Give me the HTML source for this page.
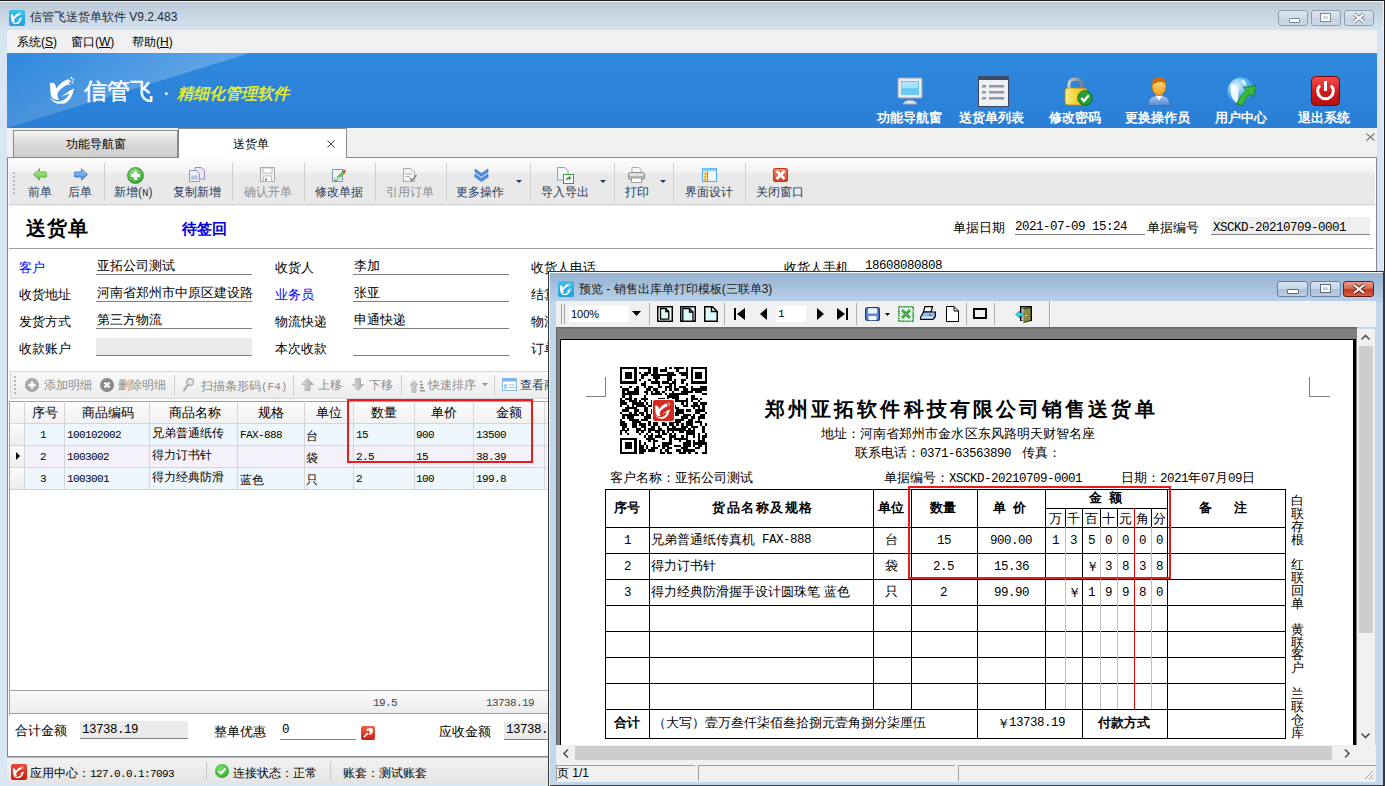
<!DOCTYPE html><html><head><meta charset="utf-8"><style>
html,body{margin:0;padding:0;width:1385px;height:786px;overflow:hidden;position:relative;background:#d9e4f1;font-family:'Liberation Sans',sans-serif}
.t{position:absolute;white-space:nowrap}
.r{position:absolute}
svg{position:absolute;overflow:visible}
</style></head><body>
<div class="r" style="left:0px;top:0px;width:1385px;height:786px;background:linear-gradient(#bccad7 2px,#d5e2ef 30px,#d9e5f2 60px,#dbe6f3 786px)"></div>
<div class="r" style="left:0px;top:0px;width:1385px;height:1px;background:#1e1e1e"></div>
<div class="r" style="left:0px;top:1px;width:1384px;height:1px;background:#eef2f6"></div>
<div class="r" style="left:1383px;top:1px;width:1px;height:785px;background:#e8eef4"></div>
<div class="r" style="left:1384px;top:0px;width:1px;height:786px;background:#1e1e1e"></div>
<div class="r" style="left:9px;top:10px;width:16px;height:16px;background:linear-gradient(#3cc0f0,#1e9ee0);border-radius:2px"></div>
<svg style="left:9px;top:9.5px" width="16.6" height="16.6" viewBox="0 0 36 36"><g fill="#fff" transform="translate(-2 -1)"><path d="M5.7 11 C7.5 10.6 9.5 10.8 10.5 11.5 C11.5 13 12 15 12.4 16.5 C15 12 19.5 8.5 24.7 6.9 C25 8.5 25.2 10.5 25.2 11.9 C21.5 13 17 16.5 14.5 19.5 C13.2 21.5 13 24 15.1 27.9 C12 28 10 27.5 8.8 26.5 C7 24.5 6.3 21 6.3 17 C6.3 14.5 6.2 12.5 5.7 11Z"/><path d="M5.3 24.5 C7.5 30.5 13.5 32.6 19.5 31.6 C25 30.4 29 24 29.8 16.5 C26.5 18.5 21 21 17.3 25.3 C20.5 23.5 23 22.5 25.3 21.8 C23 27 18.5 29.6 13.5 29.4 C10 29.2 7 27.5 5.3 24.5Z"/><circle cx="27.5" cy="6" r="1"/><circle cx="29.3" cy="7.8" r="0.9"/><circle cx="25.8" cy="9.2" r="0.9"/><circle cx="28.3" cy="10.5" r="0.9"/><circle cx="25" cy="12.4" r="0.8"/></g></svg>
<div class="t" style="left:30px;top:11px;font-size:12px;line-height:12px;color:#1e2a3a;font-weight:normal;font-family:'Liberation Sans',sans-serif;">信管飞送货单软件 V9.2.483</div>
<div class="r" style="left:1278px;top:10px;width:30px;height:16px;box-sizing:border-box;border:1px solid #8e9cb0;border-radius:3px;background:linear-gradient(#dbe4ee 0,#d0dbe7 50%,#c5d3e2 51%,#ccd9e7 100%)"></div>
<div class="r" style="left:1311px;top:10px;width:30px;height:16px;box-sizing:border-box;border:1px solid #8e9cb0;border-radius:3px;background:linear-gradient(#dbe4ee 0,#d0dbe7 50%,#c5d3e2 51%,#ccd9e7 100%)"></div>
<div class="r" style="left:1344px;top:10px;width:30px;height:16px;box-sizing:border-box;border:1px solid #8e9cb0;border-radius:3px;background:linear-gradient(#dbe4ee 0,#d0dbe7 50%,#c5d3e2 51%,#ccd9e7 100%)"></div>
<div class="r" style="left:1289px;top:18px;width:9px;height:3px;background:#fff;border:1px solid #7c8797;border-radius:1px"></div>
<div class="r" style="left:1321px;top:14px;width:9px;height:7px;box-sizing:border-box;border:2px solid #fff;outline:1px solid #7c8797;"></div>
<svg style="left:1352px;top:13px" width="14" height="10" viewBox="0 0 14 10"><path d="M2 1 L12 9 M12 1 L2 9" stroke="#7c8797" stroke-width="4"/><path d="M2 1 L12 9 M12 1 L2 9" stroke="#fff" stroke-width="2.2"/></svg>
<div class="r" style="left:7px;top:30px;width:1370px;height:23px;background:#f0f0f0"></div>
<div class="t" style="left:17px;top:36px;font-size:12px;line-height:12px;color:#000;font-weight:normal;font-family:'Liberation Sans',sans-serif;">系统(<u>S</u>)</div>
<div class="t" style="left:71px;top:36px;font-size:12px;line-height:12px;color:#000;font-weight:normal;font-family:'Liberation Sans',sans-serif;">窗口(<u>W</u>)</div>
<div class="t" style="left:132px;top:36px;font-size:12px;line-height:12px;color:#000;font-weight:normal;font-family:'Liberation Sans',sans-serif;">帮助(<u>H</u>)</div>
<svg style="left:7px;top:53px" width="1370" height="75" viewBox="0 0 1370 75">
<defs><linearGradient id="bg1" x1="0" y1="0" x2="0" y2="1"><stop offset="0" stop-color="#2e89df"/><stop offset="1" stop-color="#2a7fd5"/></linearGradient>
<linearGradient id="bg2" x1="0" y1="0" x2="1" y2="0.6"><stop offset="0" stop-color="#fff" stop-opacity="0"/><stop offset="1" stop-color="#fff" stop-opacity="0.34"/></linearGradient></defs>
<rect width="1370" height="75" fill="url(#bg1)"/>
<path d="M0 0 L243 0 L0 75Z" fill="url(#bg2)"/>
<path d="M0 75 L560 8 L0 75Z" fill="#fff" opacity="0.06"/>
</svg>
<svg style="left:44px;top:72px" width="36.0" height="36.0" viewBox="0 0 36 36"><g fill="#fff" transform="translate(0 0)"><path d="M5.7 11 C7.5 10.6 9.5 10.8 10.5 11.5 C11.5 13 12 15 12.4 16.5 C15 12 19.5 8.5 24.7 6.9 C25 8.5 25.2 10.5 25.2 11.9 C21.5 13 17 16.5 14.5 19.5 C13.2 21.5 13 24 15.1 27.9 C12 28 10 27.5 8.8 26.5 C7 24.5 6.3 21 6.3 17 C6.3 14.5 6.2 12.5 5.7 11Z"/><path d="M5.3 24.5 C7.5 30.5 13.5 32.6 19.5 31.6 C25 30.4 29 24 29.8 16.5 C26.5 18.5 21 21 17.3 25.3 C20.5 23.5 23 22.5 25.3 21.8 C23 27 18.5 29.6 13.5 29.4 C10 29.2 7 27.5 5.3 24.5Z"/><circle cx="27.5" cy="6" r="1"/><circle cx="29.3" cy="7.8" r="0.9"/><circle cx="25.8" cy="9.2" r="0.9"/><circle cx="28.3" cy="10.5" r="0.9"/><circle cx="25" cy="12.4" r="0.8"/></g></svg>
<div class="t" style="left:84px;top:80px;font-size:23px;line-height:23px;color:#fff;font-weight:500;font-family:'Liberation Sans',sans-serif;letter-spacing:0px;-webkit-text-stroke:0.5px #fff">信管飞</div>
<div class="t" style="left:164px;top:86px;font-size:16px;line-height:16px;color:#fff;font-weight:bold;font-family:'Liberation Sans',sans-serif;">·</div>
<div class="t" style="left:177px;top:86px;font-size:16px;line-height:16px;color:#eef21c;font-weight:500;font-family:'Liberation Sans',sans-serif;font-style:italic;-webkit-text-stroke:0.45px #eef21c">精细化管理软件</div>
<div class="t" style="left:877px;top:111px;font-size:13px;line-height:13px;color:#fff;font-weight:bold;font-family:'Liberation Sans',sans-serif;">功能导航窗</div>
<div class="t" style="left:959px;top:111px;font-size:13px;line-height:13px;color:#fff;font-weight:bold;font-family:'Liberation Sans',sans-serif;">送货单列表</div>
<div class="t" style="left:1049px;top:111px;font-size:13px;line-height:13px;color:#fff;font-weight:bold;font-family:'Liberation Sans',sans-serif;">修改密码</div>
<div class="t" style="left:1125px;top:111px;font-size:13px;line-height:13px;color:#fff;font-weight:bold;font-family:'Liberation Sans',sans-serif;">更换操作员</div>
<div class="t" style="left:1215px;top:111px;font-size:13px;line-height:13px;color:#fff;font-weight:bold;font-family:'Liberation Sans',sans-serif;">用户中心</div>
<div class="t" style="left:1298px;top:111px;font-size:13px;line-height:13px;color:#fff;font-weight:bold;font-family:'Liberation Sans',sans-serif;">退出系统</div>
<svg style="left:897px;top:77px" width="26" height="28" viewBox="0 0 26 28">
<rect x="1" y="1" width="24" height="20" rx="1" fill="#e8ecef" stroke="#9aa3ab"/>
<rect x="4" y="4" width="18" height="14" fill="#6cc8f4"/><rect x="5" y="5" width="16" height="6" fill="#a8e2fb"/>
<path d="M6 27 C8 22 18 22 20 27Z" fill="#e6e9ec" stroke="#a0a8b0"/>
</svg>
<svg style="left:978px;top:76px" width="31" height="31" viewBox="0 0 31 31">
<rect x="0.5" y="0.5" width="30" height="30" fill="#eef0f4" stroke="#3c4660"/>
<rect x="0" y="0" width="31" height="4" fill="#3c4a6a"/>
<rect x="4" y="9" width="4" height="2.5" fill="#8f95aa"/><rect x="11" y="9" width="15" height="2.5" fill="#8f95aa"/>
<rect x="4" y="15" width="4" height="2.5" fill="#8f95aa"/><rect x="11" y="15" width="15" height="2.5" fill="#8f95aa"/>
<rect x="4" y="21" width="4" height="2.5" fill="#8f95aa"/><rect x="11" y="21" width="15" height="2.5" fill="#8f95aa"/>
</svg>
<svg style="left:1064px;top:76px" width="29" height="31" viewBox="0 0 29 31">
<defs><linearGradient id="lk" x1="0" y1="0" x2="1" y2="0"><stop offset="0" stop-color="#f8e88a"/><stop offset="0.5" stop-color="#f4d434"/><stop offset="1" stop-color="#d8a810"/></linearGradient>
<linearGradient id="sh" x1="0" y1="0" x2="1" y2="0"><stop offset="0" stop-color="#c8ccd0"/><stop offset="1" stop-color="#7a8088"/></linearGradient></defs>
<path d="M5 13 V8 C5 1.5 18 1.5 18 8 V13" fill="none" stroke="url(#sh)" stroke-width="3.2"/>
<rect x="1" y="12" width="22" height="17" rx="3" fill="url(#lk)" stroke="#b08a10" stroke-width="0.8"/>
<circle cx="21" cy="22" r="7.3" fill="#22a030" stroke="#0c6a18" stroke-width="0.8"/>
<path d="M17.2 22 L20 25 L24.8 19.3" fill="none" stroke="#fff" stroke-width="2.4"/>
</svg>
<svg style="left:1147px;top:76px" width="24" height="31" viewBox="0 0 24 31">
<defs><linearGradient id="pf" x1="0" y1="0" x2="0" y2="1"><stop offset="0" stop-color="#ffe08a"/><stop offset="1" stop-color="#f5a020"/></linearGradient>
<linearGradient id="pb" x1="0" y1="0" x2="0" y2="1"><stop offset="0" stop-color="#a8c8f0"/><stop offset="1" stop-color="#5a88d0"/></linearGradient></defs>
<path d="M1 29.5 C1 22 5 19.5 12 19.5 C19 19.5 23 22 23 29.5Z" fill="url(#pb)" stroke="#3f6aa8" stroke-width="0.8"/>
<path d="M8.5 19.5 L12 24.5 L15.5 19.5Z" fill="#fff"/>
<ellipse cx="12" cy="10.5" rx="7" ry="8.8" fill="url(#pf)" stroke="#b86a08" stroke-width="0.8"/>
<path d="M5 9.5 C4.5 2.5 9 1 12 1 C16 1 20 3 19 9.5 C17.5 6.5 15 5.5 12 6 C9 6.5 7 7.5 5 9.5Z" fill="#c8700e"/>
</svg>
<svg style="left:1227px;top:77px" width="30" height="29" viewBox="0 0 30 29">
<defs><radialGradient id="gl" cx="0.35" cy="0.3" r="0.8"><stop offset="0" stop-color="#d8f0ff"/><stop offset="0.5" stop-color="#5ab4f0"/><stop offset="1" stop-color="#1f6fc0"/></radialGradient></defs>
<circle cx="14" cy="14" r="13.5" fill="url(#gl)"/>
<path d="M4 7 C8 6 9 10 12 12 C10 16 13 20 10 26 C5 23 2 16 4 7Z" fill="#fff" opacity="0.9"/>
<path d="M14 3 C17 3 20 5 19 8 C17 8 15 6 14 3Z" fill="#fff" opacity="0.8"/>
<path d="M10 27.5 C12 21 15 16.5 19.5 14 L16.5 10.5 L28.5 8.5 L26.5 20 L23 16.8 C20 19 17.5 23 16 28.5Z" fill="#3cb83a" stroke="#177a1a" stroke-width="0.8"/>
</svg>
<svg style="left:1311px;top:76px" width="29" height="30" viewBox="0 0 29 30">
<defs><linearGradient id="pw" x1="0" y1="0" x2="0" y2="1"><stop offset="0" stop-color="#f05050"/><stop offset="0.5" stop-color="#d41c1c"/><stop offset="1" stop-color="#b01010"/></linearGradient></defs>
<rect x="0.5" y="0.5" width="28" height="29" rx="4" fill="url(#pw)" stroke="#7a0808"/>
<path d="M9 9.5 A7.8 7.8 0 1 0 20 9.5" fill="none" stroke="#fff" stroke-width="3"/>
<rect x="13" y="5" width="3" height="10" fill="#fff"/>
</svg>
<div class="r" style="left:7px;top:128px;width:1370px;height:29px;background:#f0f0f0"></div>
<div class="r" style="left:13px;top:130px;width:165px;height:27px;box-sizing:border-box;border:1px solid #8a8a8a;border-bottom:none;background:linear-gradient(#f4f4f4,#d9d9d9 50%,#cfcfcf)"></div>
<div class="t" style="left:66px;top:138px;font-size:12px;line-height:12px;color:#000;font-weight:normal;font-family:'Liberation Sans',sans-serif;">功能导航窗</div>
<div class="r" style="left:178px;top:128px;width:169px;height:30px;box-sizing:border-box;border:1px solid #8a8a8a;border-bottom:none;background:#fff"></div>
<div class="t" style="left:233px;top:138px;font-size:12px;line-height:12px;color:#000;font-weight:normal;font-family:'Liberation Sans',sans-serif;">送货单</div>
<svg style="left:326px;top:139px" width="10" height="10" viewBox="0 0 10 10"><path d="M1.5 1.5 L8.5 8.5 M8.5 1.5 L1.5 8.5" stroke="#444" stroke-width="1"/></svg>
<svg style="left:1366px;top:133px" width="9" height="8" viewBox="0 0 9 8"><path d="M0.5 0.5 L8.5 7.5 M8.5 0.5 L0.5 7.5" stroke="#777" stroke-width="1.1"/></svg>
<div class="r" style="left:7px;top:157px;width:1370px;height:600px;box-sizing:border-box;border:1px solid #828790;background:#fff"></div>
<div class="r" style="left:179px;top:157px;width:167px;height:1px;background:#fff"></div>
<div class="r" style="left:9px;top:158px;width:1366px;height:46px;background:linear-gradient(#fdfdfd 0,#f3f3f3 14px,#e8e8e8 16px,#e9e9e9 100%)"></div>
<div class="r" style="left:9px;top:204px;width:1366px;height:1px;background:#d2d2d2"></div>
<div class="r" style="left:9px;top:205px;width:1366px;height:1px;background:#efefef"></div>
<div class="r" style="left:13px;top:172px;width:2px;height:2px;background:#b8b8b8"></div>
<div class="r" style="left:13px;top:176px;width:2px;height:2px;background:#b8b8b8"></div>
<div class="r" style="left:13px;top:180px;width:2px;height:2px;background:#b8b8b8"></div>
<div class="r" style="left:13px;top:184px;width:2px;height:2px;background:#b8b8b8"></div>
<div class="r" style="left:13px;top:188px;width:2px;height:2px;background:#b8b8b8"></div>
<div class="r" style="left:13px;top:192px;width:2px;height:2px;background:#b8b8b8"></div>
<div class="r" style="left:104px;top:163px;width:1px;height:38px;background:#cfcfcf"></div>
<div class="r" style="left:232px;top:163px;width:1px;height:38px;background:#cfcfcf"></div>
<div class="r" style="left:304px;top:163px;width:1px;height:38px;background:#cfcfcf"></div>
<div class="r" style="left:375px;top:163px;width:1px;height:38px;background:#cfcfcf"></div>
<div class="r" style="left:446px;top:163px;width:1px;height:38px;background:#cfcfcf"></div>
<div class="r" style="left:530px;top:163px;width:1px;height:38px;background:#cfcfcf"></div>
<div class="r" style="left:614px;top:163px;width:1px;height:38px;background:#cfcfcf"></div>
<div class="r" style="left:673px;top:163px;width:1px;height:38px;background:#cfcfcf"></div>
<div class="r" style="left:745px;top:163px;width:1px;height:38px;background:#cfcfcf"></div>
<div class="t" style="left:28px;top:186px;font-size:12px;line-height:12px;color:#1e395b;font-weight:normal;font-family:'Liberation Sans',sans-serif;">前单</div>
<div class="t" style="left:68px;top:186px;font-size:12px;line-height:12px;color:#1e395b;font-weight:normal;font-family:'Liberation Sans',sans-serif;">后单</div>
<div class="t" style="left:114px;top:186px;font-size:12px;line-height:12px;color:#1e395b;font-weight:normal;font-family:'Liberation Sans',sans-serif;">新增(<span style="font-family:'Liberation Mono',monospace;font-size:11px">N</span>)</div>
<div class="t" style="left:173px;top:186px;font-size:12px;line-height:12px;color:#1e395b;font-weight:normal;font-family:'Liberation Sans',sans-serif;">复制新增</div>
<div class="t" style="left:244px;top:186px;font-size:12px;line-height:12px;color:#8d8d8d;font-weight:normal;font-family:'Liberation Sans',sans-serif;">确认开单</div>
<div class="t" style="left:315px;top:186px;font-size:12px;line-height:12px;color:#1e395b;font-weight:normal;font-family:'Liberation Sans',sans-serif;">修改单据</div>
<div class="t" style="left:386px;top:186px;font-size:12px;line-height:12px;color:#8d8d8d;font-weight:normal;font-family:'Liberation Sans',sans-serif;">引用订单</div>
<div class="t" style="left:456px;top:186px;font-size:12px;line-height:12px;color:#1e395b;font-weight:normal;font-family:'Liberation Sans',sans-serif;">更多操作</div>
<div class="t" style="left:541px;top:186px;font-size:12px;line-height:12px;color:#1e395b;font-weight:normal;font-family:'Liberation Sans',sans-serif;">导入导出</div>
<div class="t" style="left:625px;top:186px;font-size:12px;line-height:12px;color:#1e395b;font-weight:normal;font-family:'Liberation Sans',sans-serif;">打印</div>
<div class="t" style="left:685px;top:186px;font-size:12px;line-height:12px;color:#1e395b;font-weight:normal;font-family:'Liberation Sans',sans-serif;">界面设计</div>
<div class="t" style="left:756px;top:186px;font-size:12px;line-height:12px;color:#1e395b;font-weight:normal;font-family:'Liberation Sans',sans-serif;">关闭窗口</div>
<svg style="left:516px;top:180px" width="6" height="3" viewBox="0 0 6 3"><path d="M0 0 H6 L3 3Z" fill="#1e395b"/></svg>
<svg style="left:600px;top:180px" width="6" height="3" viewBox="0 0 6 3"><path d="M0 0 H6 L3 3Z" fill="#1e395b"/></svg>
<svg style="left:660px;top:180px" width="6" height="3" viewBox="0 0 6 3"><path d="M0 0 H6 L3 3Z" fill="#1e395b"/></svg>
<svg style="left:33px;top:168px" width="14" height="13" viewBox="0 0 14 13"><defs><linearGradient id="ga" x1="0" y1="0" x2="0" y2="1"><stop offset="0" stop-color="#c8f0a0"/><stop offset="1" stop-color="#5cc040"/></linearGradient></defs>
<path d="M0.5 6.5 L6.5 0.8 V4 H13.3 V9 H6.5 V12.2Z" fill="url(#ga)" stroke="#58b040" stroke-width="0.9"/></svg>
<svg style="left:74px;top:168px" width="14" height="13" viewBox="0 0 14 13"><defs><linearGradient id="gb" x1="0" y1="0" x2="0" y2="1"><stop offset="0" stop-color="#a8d0fa"/><stop offset="1" stop-color="#3a82e0"/></linearGradient></defs>
<path d="M13.5 6.5 L7.5 0.8 V4 H0.7 V9 H7.5 V12.2Z" fill="url(#gb)" stroke="#3a7ad0" stroke-width="0.9"/></svg>
<svg style="left:127px;top:167px" width="17" height="17" viewBox="0 0 17 17"><defs><radialGradient id="gc" cx="0.45" cy="0.35" r="0.7"><stop offset="0" stop-color="#9ee88a"/><stop offset="1" stop-color="#2ea02a"/></radialGradient></defs>
<circle cx="8.5" cy="8.5" r="8" fill="url(#gc)" stroke="#2a8a26" stroke-width="0.8"/><path d="M8.5 4 V13 M4 8.5 H13" stroke="#fff" stroke-width="3"/></svg>
<svg style="left:189px;top:167px" width="16" height="15" viewBox="0 0 16 15"><path d="M6 0.5 H12.5 L15.5 3.5 V12 H6Z" fill="#ece6f6" stroke="#9a88c8"/><path d="M0.5 3.5 H7.5 L10.5 6.5 V14.5 H0.5Z" fill="#eef2fa" stroke="#8c9cc0"/><rect x="2" y="8.5" width="7" height="4" fill="#b8c4e0"/></svg>
<svg style="left:260px;top:167px" width="15" height="15" viewBox="0 0 15 15"><path d="M0.5 0.5 H14.5 V14.5 H0.5Z" fill="#f2f2f2" stroke="#a8a8a8" stroke-width="1"/><rect x="3" y="1" width="9" height="5" fill="#fff" stroke="#b0b0b0" stroke-width="0.8"/><rect x="3.5" y="9" width="8" height="5.5" fill="#fff" stroke="#b0b0b0" stroke-width="0.8"/><rect x="5" y="11" width="2" height="3" fill="#a0a0a0"/></svg>
<svg style="left:332px;top:168px" width="14" height="14" viewBox="0 0 14 14"><path d="M0.5 1.5 H10.5 V13.5 H0.5Z" fill="#f4f8fc" stroke="#7890c0"/><path d="M3 11 L11 3 L13 5 L5 12.5 L2.5 13Z" fill="#70c850" stroke="#3a8a2a" stroke-width="0.6"/><circle cx="12.2" cy="3.2" r="1.6" fill="#e84c3c"/><rect x="2" y="9" width="7" height="3" fill="#c8d4e8" opacity="0.8"/></svg>
<svg style="left:403px;top:168px" width="14" height="14" viewBox="0 0 14 14"><path d="M0.5 0.5 H8 L11.5 4 V13.5 H0.5Z" fill="#f4f4f4" stroke="#a8a8a8"/><path d="M2.5 6 H9 M2.5 8.5 H7" stroke="#b0b0b0"/><path d="M7 10 L9 12.5 L13.5 7" fill="none" stroke="#8a8a8a" stroke-width="1.6"/></svg>
<svg style="left:474px;top:168px" width="15" height="14" viewBox="0 0 15 14"><path d="M1 1 L7.5 5.5 L14 1 V4 L7.5 8.5 L1 4Z" fill="#4a90e8" stroke="#2a6ac8" stroke-width="0.6"/><path d="M1 6 L7.5 10.5 L14 6 V9 L7.5 13.5 L1 9Z" fill="#4a90e8" stroke="#2a6ac8" stroke-width="0.6"/></svg>
<svg style="left:557px;top:167px" width="17" height="17" viewBox="0 0 17 17"><path d="M0.5 0.5 H8 L11 3.5 V13 H0.5Z" fill="#f0f4fc" stroke="#8aa0cc"/><rect x="6.5" y="7.5" width="10" height="9" fill="#fff" stroke="#3aa040"/><path d="M9 14 C9 11 10 10 12 10 V8.5 L14.5 11 L12 13.5 V12 C11 12 10 12.5 9 14Z" fill="#3aa040"/></svg>
<svg style="left:628px;top:167px" width="17" height="16" viewBox="0 0 17 16"><path d="M4 0.5 H11 L13 2.5 V6 H4Z" fill="#f4f8ff" stroke="#9ab0d8"/><rect x="0.5" y="5.5" width="16" height="7" rx="2" fill="#b8b8b8" stroke="#8a8a8a"/><rect x="1.5" y="6" width="14" height="3" rx="1" fill="#e0e0e0"/><rect x="3.5" y="11" width="10" height="4.5" fill="#fff" stroke="#a0a0a0"/></svg>
<svg style="left:702px;top:168px" width="15" height="14" viewBox="0 0 15 14"><rect x="0.5" y="0.5" width="14" height="13" fill="#f0f4ff" stroke="#4aa8f0"/><rect x="0.5" y="0.5" width="14" height="2.5" fill="#8ccaf8"/><rect x="1.5" y="3.5" width="3.5" height="9.5" fill="#f8e080"/><rect x="2.5" y="5" width="1.5" height="1.5" fill="#e08a20"/><rect x="2.5" y="8" width="1.5" height="1.5" fill="#e08a20"/><rect x="2.5" y="11" width="1.5" height="1.5" fill="#e08a20"/><path d="M5.5 3 V13.5" stroke="#4aa8f0"/></svg>
<svg style="left:773px;top:168px" width="15" height="14" viewBox="0 0 15 14"><defs><linearGradient id="gd" x1="0" y1="0" x2="0" y2="1"><stop offset="0" stop-color="#f88a6a"/><stop offset="1" stop-color="#d8381a"/></linearGradient></defs><rect x="0.5" y="0.5" width="14" height="13" rx="1.5" fill="url(#gd)" stroke="#c03a20"/><path d="M3.5 3 L11.5 11 M11.5 3 L3.5 11" stroke="#fff" stroke-width="2.8"/></svg>
<div class="t" style="left:26px;top:218px;font-size:20px;line-height:20px;color:#000;font-weight:bold;font-family:'Liberation Serif',serif;letter-spacing:1px">送货单</div>
<div class="t" style="left:182px;top:221px;font-size:15px;line-height:15px;color:#0000e0;font-weight:bold;font-family:'Liberation Sans',sans-serif;">待签回</div>
<div class="t" style="left:953px;top:221px;font-size:13px;line-height:13px;color:#000;font-weight:normal;font-family:'Liberation Sans',sans-serif;">单据日期</div>
<div class="t" style="left:1015px;top:221px;font-size:12.5px;line-height:12.5px;color:#000;font-weight:normal;font-family:'Liberation Mono',monospace;letter-spacing:-0.5px">2021-07-09 15:24</div>
<div class="r" style="left:1015px;top:234px;width:130px;height:1px;background:#808080"></div>
<div class="t" style="left:1147px;top:221px;font-size:13px;line-height:13px;color:#000;font-weight:normal;font-family:'Liberation Sans',sans-serif;">单据编号</div>
<div class="r" style="left:1211px;top:217px;width:159px;height:18px;background:#efefef"></div>
<div class="r" style="left:1211px;top:234px;width:159px;height:1px;background:#808080"></div>
<div class="t" style="left:1213px;top:222px;font-size:12.5px;line-height:12.5px;color:#000;font-weight:normal;font-family:'Liberation Mono',monospace;letter-spacing:-0.5px">XSCKD-20210709-0001</div>
<div class="r" style="left:9px;top:248px;width:1365px;height:1px;background:#a0a0a0"></div>
<div class="t" style="left:19px;top:261px;font-size:13px;line-height:13px;color:#0000ff;font-weight:normal;font-family:'Liberation Sans',sans-serif;">客户</div>
<div class="t" style="left:19px;top:288px;font-size:13px;line-height:13px;color:#000;font-weight:normal;font-family:'Liberation Sans',sans-serif;">收货地址</div>
<div class="t" style="left:19px;top:315px;font-size:13px;line-height:13px;color:#000;font-weight:normal;font-family:'Liberation Sans',sans-serif;">发货方式</div>
<div class="t" style="left:19px;top:342px;font-size:13px;line-height:13px;color:#000;font-weight:normal;font-family:'Liberation Sans',sans-serif;">收款账户</div>
<div class="r" style="left:96px;top:274px;width:156px;height:1px;background:#808080"></div>
<div class="t" style="left:97px;top:259px;font-size:13px;line-height:13px;color:#000;font-weight:normal;font-family:'Liberation Sans',sans-serif;">亚拓公司测试</div>
<div class="r" style="left:96px;top:301px;width:156px;height:1px;background:#808080"></div>
<div class="t" style="left:97px;top:286px;font-size:13px;line-height:13px;color:#000;font-weight:normal;font-family:'Liberation Sans',sans-serif;">河南省郑州市中原区建设路</div>
<div class="r" style="left:96px;top:328px;width:156px;height:1px;background:#808080"></div>
<div class="t" style="left:97px;top:313px;font-size:13px;line-height:13px;color:#000;font-weight:normal;font-family:'Liberation Sans',sans-serif;">第三方物流</div>
<div class="r" style="left:96px;top:338px;width:156px;height:17px;background:#ebebeb"></div>
<div class="r" style="left:96px;top:355px;width:156px;height:1px;background:#808080"></div>
<div class="t" style="left:275px;top:261px;font-size:13px;line-height:13px;color:#000;font-weight:normal;font-family:'Liberation Sans',sans-serif;">收货人</div>
<div class="t" style="left:275px;top:288px;font-size:13px;line-height:13px;color:#0000ff;font-weight:normal;font-family:'Liberation Sans',sans-serif;">业务员</div>
<div class="t" style="left:275px;top:315px;font-size:13px;line-height:13px;color:#000;font-weight:normal;font-family:'Liberation Sans',sans-serif;">物流快递</div>
<div class="t" style="left:275px;top:342px;font-size:13px;line-height:13px;color:#000;font-weight:normal;font-family:'Liberation Sans',sans-serif;">本次收款</div>
<div class="r" style="left:353px;top:274px;width:156px;height:1px;background:#808080"></div>
<div class="t" style="left:354px;top:259px;font-size:13px;line-height:13px;color:#000;font-weight:normal;font-family:'Liberation Sans',sans-serif;">李加</div>
<div class="r" style="left:353px;top:301px;width:156px;height:1px;background:#808080"></div>
<div class="t" style="left:354px;top:286px;font-size:13px;line-height:13px;color:#000;font-weight:normal;font-family:'Liberation Sans',sans-serif;">张亚</div>
<div class="r" style="left:353px;top:328px;width:156px;height:1px;background:#808080"></div>
<div class="t" style="left:354px;top:313px;font-size:13px;line-height:13px;color:#000;font-weight:normal;font-family:'Liberation Sans',sans-serif;">申通快递</div>
<div class="r" style="left:353px;top:355px;width:156px;height:1px;background:#808080"></div>
<div class="t" style="left:531px;top:261px;font-size:13px;line-height:13px;color:#000;font-weight:normal;font-family:'Liberation Sans',sans-serif;">收货人电话</div>
<div class="t" style="left:531px;top:288px;font-size:13px;line-height:13px;color:#000;font-weight:normal;font-family:'Liberation Sans',sans-serif;">结算方式</div>
<div class="t" style="left:531px;top:315px;font-size:13px;line-height:13px;color:#000;font-weight:normal;font-family:'Liberation Sans',sans-serif;">物流单号</div>
<div class="t" style="left:531px;top:342px;font-size:13px;line-height:13px;color:#000;font-weight:normal;font-family:'Liberation Sans',sans-serif;">订单号</div>
<div class="t" style="left:784px;top:261px;font-size:13px;line-height:13px;color:#000;font-weight:normal;font-family:'Liberation Sans',sans-serif;">收货人手机</div>
<div class="t" style="left:865px;top:259.5px;font-size:12.5px;line-height:12.5px;color:#000;font-weight:normal;font-family:'Liberation Mono',monospace;letter-spacing:-0.5px">18608080808</div>
<div class="r" style="left:10px;top:371px;width:1364px;height:28px;box-sizing:border-box;border:1px solid #d4d4d4;background:linear-gradient(#fafafa,#ececec)"></div>
<div class="r" style="left:14px;top:376px;width:2px;height:2px;background:#b8b8b8"></div>
<div class="r" style="left:14px;top:380px;width:2px;height:2px;background:#b8b8b8"></div>
<div class="r" style="left:14px;top:384px;width:2px;height:2px;background:#b8b8b8"></div>
<div class="r" style="left:14px;top:388px;width:2px;height:2px;background:#b8b8b8"></div>
<div class="r" style="left:14px;top:392px;width:2px;height:2px;background:#b8b8b8"></div>
<div class="r" style="left:174px;top:375px;width:1px;height:20px;background:#cfcfcf"></div>
<div class="r" style="left:293px;top:375px;width:1px;height:20px;background:#cfcfcf"></div>
<div class="r" style="left:401px;top:375px;width:1px;height:20px;background:#cfcfcf"></div>
<div class="r" style="left:494px;top:375px;width:1px;height:20px;background:#cfcfcf"></div>
<div class="t" style="left:44px;top:379px;font-size:12px;line-height:12px;color:#8d8d8d;font-weight:normal;font-family:'Liberation Sans',sans-serif;">添加明细</div>
<div class="t" style="left:118px;top:379px;font-size:12px;line-height:12px;color:#8d8d8d;font-weight:normal;font-family:'Liberation Sans',sans-serif;">删除明细</div>
<div class="t" style="left:201px;top:379.5px;font-size:12px;line-height:12px;color:#8d8d8d;font-weight:normal;font-family:'Liberation Sans',sans-serif;">扫描条形码<span style="font-family:'Liberation Mono',monospace;font-size:11px">(F4)</span></div>
<div class="t" style="left:318px;top:379px;font-size:12px;line-height:12px;color:#8d8d8d;font-weight:normal;font-family:'Liberation Sans',sans-serif;">上移</div>
<div class="t" style="left:369px;top:379px;font-size:12px;line-height:12px;color:#8d8d8d;font-weight:normal;font-family:'Liberation Sans',sans-serif;">下移</div>
<div class="t" style="left:428px;top:379px;font-size:12px;line-height:12px;color:#8d8d8d;font-weight:normal;font-family:'Liberation Sans',sans-serif;">快速排序</div>
<div class="t" style="left:520px;top:379px;font-size:12px;line-height:12px;color:#1e395b;font-weight:normal;font-family:'Liberation Sans',sans-serif;">查看商品</div>
<div class="r" style="left:25px;top:378px;width:14px;height:14px;border-radius:50%;background:#a8a8a8"></div>
<svg style="left:25px;top:378px" width="14" height="14"><path d="M7 3.5 V10.5 M3.5 7 H10.5" stroke="#fff" stroke-width="2.4"/></svg>
<div class="r" style="left:100px;top:378px;width:14px;height:14px;border-radius:50%;background:#8a8a8a"></div>
<svg style="left:100px;top:378px" width="14" height="14"><path d="M4.5 4.5 L9.5 9.5 M9.5 4.5 L4.5 9.5" stroke="#fff" stroke-width="2.2"/></svg>
<svg style="left:183px;top:378px" width="11" height="14" viewBox="0 0 11 14"><circle cx="7" cy="4" r="3.4" fill="#e8e8e8" stroke="#a8a8a8" stroke-width="1.2"/><path d="M5 6.5 L1 12.5" stroke="#b0b0b0" stroke-width="2.2" stroke-linecap="round"/></svg>
<svg style="left:301px;top:378px" width="13" height="13" viewBox="0 0 13 13"><defs><linearGradient id="gu" x1="0" y1="0" x2="1" y2="0"><stop offset="0" stop-color="#e8e8e8"/><stop offset="1" stop-color="#a0a0a0"/></linearGradient></defs><path d="M6.5 0.5 L12.5 6.5 H9 V12.5 H4 V6.5 H0.5Z" fill="url(#gu)" stroke="#a8a8a8" stroke-width="0.8"/></svg>
<svg style="left:352px;top:378px" width="12" height="13" viewBox="0 0 12 13"><defs><linearGradient id="gdn" x1="0" y1="0" x2="1" y2="0"><stop offset="0" stop-color="#e8e8e8"/><stop offset="1" stop-color="#a0a0a0"/></linearGradient></defs><path d="M6 12.5 L11.5 6.5 H8.5 V0.5 H3.5 V6.5 H0.5Z" fill="url(#gdn)" stroke="#a8a8a8" stroke-width="0.8"/></svg>
<svg style="left:410px;top:380px" width="15" height="13" viewBox="0 0 15 13"><path d="M4 0.5 L8 5 H6 V12.5 H2 V5 H0Z" fill="#c8c8c8" stroke="#a8a8a8" stroke-width="0.6"/><rect x="10" y="1" width="2" height="1.5" fill="#909090"/><rect x="10" y="4" width="3" height="1.5" fill="#909090"/><rect x="10" y="7" width="4" height="1.5" fill="#909090"/><rect x="10" y="10" width="5" height="1.5" fill="#909090"/></svg>
<svg style="left:482px;top:383px" width="6" height="3"><path d="M0 0 H6 L3 3Z" fill="#909090"/></svg>
<svg style="left:502px;top:378px" width="15" height="13" viewBox="0 0 15 13"><rect x="0.5" y="0.5" width="14" height="12" fill="#fff" stroke="#8ab8e8"/><rect x="1" y="1" width="13" height="2.5" fill="#7ab8f0"/><rect x="2" y="6" width="3" height="5" fill="#a8d0f4"/><path d="M6.5 7 H13 M6.5 9.5 H13" stroke="#8aaad0" stroke-width="0.8"/></svg>
<div class="r" style="left:10px;top:401px;width:538px;height:289px;background:#fff"></div>
<div class="r" style="left:10px;top:401px;width:538px;height:23px;background:linear-gradient(#fdfdfd,#f0f0f0)"></div>
<div class="r" style="left:10px;top:401px;width:538px;height:1px;background:#a0a0a0"></div>
<div class="r" style="left:10px;top:423px;width:538px;height:1px;background:#d5d5d5"></div>
<div class="r" style="left:24px;top:424px;width:524px;height:22px;background:#eef6fe"></div>
<div class="r" style="left:10px;top:424px;width:14px;height:22px;background:linear-gradient(#fbfbfb,#ececec)"></div>
<div class="r" style="left:10px;top:445px;width:538px;height:1px;background:#d5d5d5"></div>
<div class="r" style="left:24px;top:446px;width:524px;height:22px;background:#f4f1fa"></div>
<div class="r" style="left:10px;top:446px;width:14px;height:22px;background:linear-gradient(#fbfbfb,#ececec)"></div>
<div class="r" style="left:10px;top:467px;width:538px;height:1px;background:#d5d5d5"></div>
<div class="r" style="left:24px;top:468px;width:524px;height:22px;background:#eef6fe"></div>
<div class="r" style="left:10px;top:468px;width:14px;height:22px;background:linear-gradient(#fbfbfb,#ececec)"></div>
<div class="r" style="left:10px;top:489px;width:538px;height:1px;background:#d5d5d5"></div>
<div class="r" style="left:24px;top:401px;width:1px;height:89px;background:#d5d5d5"></div>
<div class="r" style="left:64px;top:401px;width:1px;height:89px;background:#d5d5d5"></div>
<div class="r" style="left:149px;top:401px;width:1px;height:89px;background:#d5d5d5"></div>
<div class="r" style="left:237px;top:401px;width:1px;height:89px;background:#d5d5d5"></div>
<div class="r" style="left:304px;top:401px;width:1px;height:89px;background:#d5d5d5"></div>
<div class="r" style="left:353px;top:401px;width:1px;height:89px;background:#d5d5d5"></div>
<div class="r" style="left:414px;top:401px;width:1px;height:89px;background:#d5d5d5"></div>
<div class="r" style="left:473px;top:401px;width:1px;height:89px;background:#d5d5d5"></div>
<div class="r" style="left:544px;top:401px;width:1px;height:89px;background:#d5d5d5"></div>
<div class="t" style="left:32px;top:407px;font-size:12.5px;line-height:12.5px;color:#000;font-weight:normal;font-family:'Liberation Sans',sans-serif;">序号</div>
<div class="t" style="left:82px;top:407px;font-size:12.5px;line-height:12.5px;color:#000;font-weight:normal;font-family:'Liberation Sans',sans-serif;">商品编码</div>
<div class="t" style="left:169px;top:407px;font-size:12.5px;line-height:12.5px;color:#000;font-weight:normal;font-family:'Liberation Sans',sans-serif;">商品名称</div>
<div class="t" style="left:258px;top:407px;font-size:12.5px;line-height:12.5px;color:#000;font-weight:normal;font-family:'Liberation Sans',sans-serif;">规格</div>
<div class="t" style="left:316px;top:407px;font-size:12.5px;line-height:12.5px;color:#000;font-weight:normal;font-family:'Liberation Sans',sans-serif;">单位</div>
<div class="t" style="left:371px;top:407px;font-size:12.5px;line-height:12.5px;color:#000;font-weight:normal;font-family:'Liberation Sans',sans-serif;">数量</div>
<div class="t" style="left:431px;top:407px;font-size:12.5px;line-height:12.5px;color:#000;font-weight:normal;font-family:'Liberation Sans',sans-serif;">单价</div>
<div class="t" style="left:496px;top:407px;font-size:12.5px;line-height:12.5px;color:#000;font-weight:normal;font-family:'Liberation Sans',sans-serif;">金额</div>
<div class="t" style="left:40px;top:430px;font-size:11px;line-height:11px;color:#000;font-weight:normal;font-family:'Liberation Mono',monospace;letter-spacing:-0.6px">1</div>
<div class="t" style="left:67px;top:430px;font-size:11px;line-height:11px;color:#000;font-weight:normal;font-family:'Liberation Mono',monospace;letter-spacing:-0.6px">100102002</div>
<div class="t" style="left:152px;top:427px;font-size:12px;line-height:12px;color:#000;font-weight:normal;font-family:'Liberation Sans',sans-serif;">兄弟普通纸传</div>
<div class="t" style="left:240px;top:430px;font-size:11px;line-height:11px;color:#000;font-weight:normal;font-family:'Liberation Mono',monospace;letter-spacing:-0.6px">FAX-888</div>
<div class="t" style="left:306px;top:430px;font-size:12px;line-height:12px;color:#000;font-weight:normal;font-family:'Liberation Sans',sans-serif;">台</div>
<div class="t" style="left:356px;top:430px;font-size:11px;line-height:11px;color:#000;font-weight:normal;font-family:'Liberation Mono',monospace;letter-spacing:-0.6px">15</div>
<div class="t" style="left:416px;top:430px;font-size:11px;line-height:11px;color:#000;font-weight:normal;font-family:'Liberation Mono',monospace;letter-spacing:-0.6px">900</div>
<div class="t" style="left:476px;top:430px;font-size:11px;line-height:11px;color:#000;font-weight:normal;font-family:'Liberation Mono',monospace;letter-spacing:-0.6px">13500</div>
<div class="t" style="left:40px;top:452px;font-size:11px;line-height:11px;color:#000;font-weight:normal;font-family:'Liberation Mono',monospace;letter-spacing:-0.6px">2</div>
<div class="t" style="left:67px;top:452px;font-size:11px;line-height:11px;color:#000;font-weight:normal;font-family:'Liberation Mono',monospace;letter-spacing:-0.6px">1003002</div>
<div class="t" style="left:152px;top:449px;font-size:12px;line-height:12px;color:#000;font-weight:normal;font-family:'Liberation Sans',sans-serif;">得力订书针</div>
<div class="t" style="left:306px;top:452px;font-size:12px;line-height:12px;color:#000;font-weight:normal;font-family:'Liberation Sans',sans-serif;">袋</div>
<div class="t" style="left:356px;top:452px;font-size:11px;line-height:11px;color:#000;font-weight:normal;font-family:'Liberation Mono',monospace;letter-spacing:-0.6px">2.5</div>
<div class="t" style="left:416px;top:452px;font-size:11px;line-height:11px;color:#000;font-weight:normal;font-family:'Liberation Mono',monospace;letter-spacing:-0.6px">15</div>
<div class="t" style="left:476px;top:452px;font-size:11px;line-height:11px;color:#000;font-weight:normal;font-family:'Liberation Mono',monospace;letter-spacing:-0.6px">38.39</div>
<div class="t" style="left:40px;top:474px;font-size:11px;line-height:11px;color:#000;font-weight:normal;font-family:'Liberation Mono',monospace;letter-spacing:-0.6px">3</div>
<div class="t" style="left:67px;top:474px;font-size:11px;line-height:11px;color:#000;font-weight:normal;font-family:'Liberation Mono',monospace;letter-spacing:-0.6px">1003001</div>
<div class="t" style="left:152px;top:471px;font-size:12px;line-height:12px;color:#000;font-weight:normal;font-family:'Liberation Sans',sans-serif;">得力经典防滑</div>
<div class="t" style="left:240px;top:474px;font-size:12px;line-height:12px;color:#000;font-weight:normal;font-family:'Liberation Sans',sans-serif;">蓝色</div>
<div class="t" style="left:306px;top:474px;font-size:12px;line-height:12px;color:#000;font-weight:normal;font-family:'Liberation Sans',sans-serif;">只</div>
<div class="t" style="left:356px;top:474px;font-size:11px;line-height:11px;color:#000;font-weight:normal;font-family:'Liberation Mono',monospace;letter-spacing:-0.6px">2</div>
<div class="t" style="left:416px;top:474px;font-size:11px;line-height:11px;color:#000;font-weight:normal;font-family:'Liberation Mono',monospace;letter-spacing:-0.6px">100</div>
<div class="t" style="left:476px;top:474px;font-size:11px;line-height:11px;color:#000;font-weight:normal;font-family:'Liberation Mono',monospace;letter-spacing:-0.6px">199.8</div>
<svg style="left:16px;top:452px" width="4" height="8"><path d="M0 0 L4 4 L0 8Z" fill="#000"/></svg>
<div class="r" style="left:347px;top:399px;width:186px;height:64px;box-sizing:border-box;border:2px solid #e81c1c"></div>
<div class="r" style="left:10px;top:690px;width:538px;height:24px;box-sizing:border-box;border-top:1px solid #a0a0a0;border-bottom:1px solid #a0a0a0;background:linear-gradient(#fafafa,#ececec)"></div>
<div class="t" style="left:373px;top:698px;font-size:11px;line-height:11px;color:#444;font-weight:normal;font-family:'Liberation Mono',monospace;letter-spacing:-0.6px">19.5</div>
<div class="t" style="left:486px;top:698px;font-size:11px;line-height:11px;color:#444;font-weight:normal;font-family:'Liberation Mono',monospace;letter-spacing:-0.6px">13738.19</div>
<div class="r" style="left:9px;top:401px;width:1px;height:314px;background:#a0a0a0"></div>
<div class="t" style="left:15px;top:724px;font-size:13px;line-height:13px;color:#000;font-weight:normal;font-family:'Liberation Sans',sans-serif;">合计金额</div>
<div class="r" style="left:80px;top:721px;width:108px;height:17px;background:#ebebeb"></div>
<div class="r" style="left:80px;top:738px;width:108px;height:1px;background:#808080"></div>
<div class="t" style="left:82px;top:723.5px;font-size:12.5px;line-height:12.5px;color:#000;font-weight:normal;font-family:'Liberation Mono',monospace;letter-spacing:-0.5px">13738.19</div>
<div class="t" style="left:214px;top:725px;font-size:13px;line-height:13px;color:#000;font-weight:normal;font-family:'Liberation Sans',sans-serif;">整单优惠</div>
<div class="r" style="left:280px;top:739px;width:76px;height:1px;background:#808080"></div>
<div class="t" style="left:282px;top:723.5px;font-size:12.5px;line-height:12.5px;color:#000;font-weight:normal;font-family:'Liberation Mono',monospace;letter-spacing:-0.5px">0</div>
<div class="r" style="left:361px;top:726px;width:14px;height:14px;border-radius:2px;background:linear-gradient(#f06040,#c8201a)"></div>
<svg style="left:361px;top:726px" width="14" height="14" viewBox="0 0 14 14"><path d="M3 11 L7 7 M6 5 C6 3 8 2.5 10 3 L8.5 4.5 L9.5 5.5 L11 4 C11.5 6 10.5 8 8 8" fill="none" stroke="#fff" stroke-width="1.6"/></svg>
<div class="t" style="left:439px;top:725px;font-size:13px;line-height:13px;color:#000;font-weight:normal;font-family:'Liberation Sans',sans-serif;">应收金额</div>
<div class="r" style="left:504px;top:722px;width:44px;height:17px;background:#ebebeb"></div>
<div class="r" style="left:504px;top:739px;width:44px;height:1px;background:#808080"></div>
<div class="t" style="left:506px;top:723.5px;font-size:12.5px;line-height:12.5px;color:#000;font-weight:normal;font-family:'Liberation Mono',monospace;letter-spacing:-0.5px">13738.19</div>
<div class="r" style="left:7px;top:757px;width:1370px;height:27px;background:linear-gradient(#f2f2f2,#e4e4e4)"></div>
<div class="r" style="left:7px;top:757px;width:1370px;height:1px;background:#b9b9b9"></div>
<div class="r" style="left:11px;top:764px;width:16px;height:16px;border-radius:2px;background:linear-gradient(#ee4a3a,#c41c10)"></div>
<svg style="left:11px;top:763.5px" width="16.6" height="16.6" viewBox="0 0 36 36"><g fill="#fff" transform="translate(-2 -1)"><path d="M5.7 11 C7.5 10.6 9.5 10.8 10.5 11.5 C11.5 13 12 15 12.4 16.5 C15 12 19.5 8.5 24.7 6.9 C25 8.5 25.2 10.5 25.2 11.9 C21.5 13 17 16.5 14.5 19.5 C13.2 21.5 13 24 15.1 27.9 C12 28 10 27.5 8.8 26.5 C7 24.5 6.3 21 6.3 17 C6.3 14.5 6.2 12.5 5.7 11Z"/><path d="M5.3 24.5 C7.5 30.5 13.5 32.6 19.5 31.6 C25 30.4 29 24 29.8 16.5 C26.5 18.5 21 21 17.3 25.3 C20.5 23.5 23 22.5 25.3 21.8 C23 27 18.5 29.6 13.5 29.4 C10 29.2 7 27.5 5.3 24.5Z"/><circle cx="27.5" cy="6" r="1"/><circle cx="29.3" cy="7.8" r="0.9"/><circle cx="25.8" cy="9.2" r="0.9"/><circle cx="28.3" cy="10.5" r="0.9"/><circle cx="25" cy="12.4" r="0.8"/></g></svg>
<div class="t" style="left:30px;top:767px;font-size:12px;line-height:12px;color:#000;font-weight:normal;font-family:'Liberation Sans',sans-serif;">应用中心：<span style="font-family:'Liberation Mono',monospace;font-size:11px;letter-spacing:-0.6px">127.0.0.1:7093</span></div>
<div class="r" style="left:206px;top:762px;width:1px;height:18px;background:#c8c8c8"></div>
<div class="r" style="left:215px;top:764px;width:14px;height:14px;border-radius:50%;background:radial-gradient(circle at 40% 35%,#7be06a,#1c9a18)"></div>
<svg style="left:215px;top:764px" width="14" height="14"><path d="M3.5 7 L6 9.5 L10.5 4.5" fill="none" stroke="#fff" stroke-width="2"/></svg>
<div class="t" style="left:233px;top:767px;font-size:12px;line-height:12px;color:#000;font-weight:normal;font-family:'Liberation Sans',sans-serif;">连接状态：正常</div>
<div class="r" style="left:330px;top:762px;width:1px;height:18px;background:#c8c8c8"></div>
<div class="t" style="left:343px;top:767px;font-size:12px;line-height:12px;color:#000;font-weight:normal;font-family:'Liberation Sans',sans-serif;">账套：测试账套</div>
<div class="r" style="left:548px;top:271px;width:837px;height:515px;box-sizing:border-box;border:1px solid #3a3a3a;border-right:none;background:linear-gradient(#95b2d0 0,#b8cfe8 29px,#c3d7ec 31px,#c3d7ec 100%)"></div>
<div class="r" style="left:549px;top:272px;width:834px;height:1px;background:#f4f8fc"></div>
<div class="r" style="left:549px;top:272px;width:1px;height:514px;background:#e8f0f8"></div>
<div class="r" style="left:1383px;top:271px;width:2px;height:515px;background:#2a3a4a"></div>
<div class="r" style="left:558px;top:281px;width:16px;height:16px;background:linear-gradient(#3cc0f0,#1e9ee0);border-radius:2px"></div>
<svg style="left:558px;top:280.5px" width="16.6" height="16.6" viewBox="0 0 36 36"><g fill="#fff" transform="translate(-2 -1)"><path d="M5.7 11 C7.5 10.6 9.5 10.8 10.5 11.5 C11.5 13 12 15 12.4 16.5 C15 12 19.5 8.5 24.7 6.9 C25 8.5 25.2 10.5 25.2 11.9 C21.5 13 17 16.5 14.5 19.5 C13.2 21.5 13 24 15.1 27.9 C12 28 10 27.5 8.8 26.5 C7 24.5 6.3 21 6.3 17 C6.3 14.5 6.2 12.5 5.7 11Z"/><path d="M5.3 24.5 C7.5 30.5 13.5 32.6 19.5 31.6 C25 30.4 29 24 29.8 16.5 C26.5 18.5 21 21 17.3 25.3 C20.5 23.5 23 22.5 25.3 21.8 C23 27 18.5 29.6 13.5 29.4 C10 29.2 7 27.5 5.3 24.5Z"/><circle cx="27.5" cy="6" r="1"/><circle cx="29.3" cy="7.8" r="0.9"/><circle cx="25.8" cy="9.2" r="0.9"/><circle cx="28.3" cy="10.5" r="0.9"/><circle cx="25" cy="12.4" r="0.8"/></g></svg>
<div class="t" style="left:579px;top:283px;font-size:12px;line-height:12px;color:#1a1a1a;font-weight:normal;font-family:'Liberation Sans',sans-serif;">预览 - 销售出库单打印模板(三联单3)</div>
<div class="r" style="left:1277px;top:281px;width:31px;height:16px;box-sizing:border-box;border:1px solid #6d7f96;border-radius:3px;background:linear-gradient(#d7e4f2 0,#c5d6ea 50%,#a9c0dc 51%,#b9cde4 100%)"></div>
<div class="r" style="left:1310px;top:281px;width:31px;height:16px;box-sizing:border-box;border:1px solid #6d7f96;border-radius:3px;background:linear-gradient(#d7e4f2 0,#c5d6ea 50%,#a9c0dc 51%,#b9cde4 100%)"></div>
<div class="r" style="left:1343px;top:281px;width:31px;height:16px;box-sizing:border-box;border:1px solid #6a1818;border-radius:3px;background:linear-gradient(#e8a090 0,#d86a52 45%,#c23a1e 55%,#d0604a 100%)"></div>
<div class="r" style="left:1287px;top:289px;width:10px;height:3px;background:#fff;border:1px solid #5a6a80;border-radius:1px"></div>
<div class="r" style="left:1321px;top:285px;width:9px;height:7px;box-sizing:border-box;border:2px solid #fff;outline:1px solid #5a6a80"></div>
<svg style="left:1352px;top:284px" width="14" height="10" viewBox="0 0 14 10"><path d="M2 1 L12 9 M12 1 L2 9" stroke="#6a2020" stroke-width="4"/><path d="M2 1 L12 9 M12 1 L2 9" stroke="#fff" stroke-width="2.2"/></svg>
<div class="r" style="left:556px;top:301px;width:820px;height:26px;background:#f0f0f0"></div>
<div class="r" style="left:561px;top:304px;width:1px;height:20px;background:#a0a0a0"></div>
<div class="r" style="left:564px;top:304px;width:1px;height:20px;background:#a0a0a0"></div>
<div class="r" style="left:569px;top:306px;width:76px;height:16px;background:#fff"></div>
<div class="r" style="left:629px;top:306px;width:16px;height:16px;background:#f0f0f0"></div>
<div class="t" style="left:571px;top:309px;font-size:11px;line-height:11px;color:#000;font-weight:normal;font-family:'Liberation Sans',sans-serif;">100%</div>
<svg style="left:632px;top:311px" width="9" height="5"><path d="M0 0 H9 L4.5 5Z" fill="#000"/></svg>
<div class="r" style="left:649px;top:303px;width:1px;height:22px;background:#b0b0b0"></div>
<div class="r" style="left:724px;top:303px;width:1px;height:22px;background:#b0b0b0"></div>
<div class="r" style="left:856px;top:303px;width:1px;height:22px;background:#b0b0b0"></div>
<div class="r" style="left:966px;top:303px;width:1px;height:22px;background:#b0b0b0"></div>
<div class="r" style="left:994px;top:303px;width:1px;height:22px;background:#b0b0b0"></div>
<div class="r" style="left:1049px;top:301px;width:1px;height:26px;background:#a8a8a8"></div>
<div class="r" style="left:1050px;top:301px;width:1px;height:26px;background:#fff"></div>
<svg style="left:657px;top:306px" width="16" height="16" viewBox="0 0 16 16"><rect x="0.75" y="0.75" width="14.5" height="14.5" fill="#fff" stroke="#000" stroke-width="1.5"/><path d="M3.5 2.5 H8.8 L11.8 5.5 V13.2 H3.5Z" fill="#dff8f8" stroke="#000" stroke-width="1.3"/><path d="M8.8 2.5 V5.5 H11.8" fill="none" stroke="#000" stroke-width="1.3"/></svg>
<svg style="left:680px;top:306px" width="16" height="16" viewBox="0 0 16 16"><rect x="0.75" y="0.75" width="14.5" height="14.5" fill="#fff" stroke="#000" stroke-width="1.5"/><path d="M2.8 2.5 H9.5 L13 6 V15.2 H2.8Z" fill="#dff8f8" stroke="#000" stroke-width="1.3"/><path d="M9.5 2.5 V6 H13" fill="none" stroke="#000" stroke-width="1.3"/></svg>
<svg style="left:704px;top:306px" width="14" height="16" viewBox="0 0 14 16"><path d="M0.75 0.75 H8.5 L13.2 5.5 V15.2 H0.75Z" fill="#dff8f8" stroke="#000" stroke-width="1.5"/><path d="M7.5 0.75 V5.5 H13.2" fill="none" stroke="#000" stroke-width="1.3"/></svg>
<svg style="left:734px;top:308px" width="12" height="12"><rect x="0" y="0" width="2" height="12" fill="#000"/><path d="M11 0 L3 6 L11 12Z" fill="#000"/></svg>
<svg style="left:760px;top:308px" width="7" height="12"><path d="M7 0 L0 6 L7 12Z" fill="#000"/></svg>
<div class="r" style="left:776px;top:306px;width:30px;height:16px;background:#fff"></div>
<div class="t" style="left:778px;top:309px;font-size:11px;line-height:11px;color:#000;font-weight:normal;font-family:'Liberation Mono',monospace;">1</div>
<svg style="left:817px;top:308px" width="7" height="12"><path d="M0 0 L7 6 L0 12Z" fill="#000"/></svg>
<svg style="left:837px;top:308px" width="12" height="12"><path d="M0 0 L8 6 L0 12Z" fill="#000"/><rect x="9" y="0" width="2" height="12" fill="#000"/></svg>
<svg style="left:865px;top:307px" width="15" height="14" viewBox="0 0 15 14"><rect x="0.6" y="0.6" width="13.8" height="12.8" rx="2" fill="#5a86d8" stroke="#1c3a80" stroke-width="1.2"/><rect x="3" y="1.2" width="9" height="5.3" fill="#eaf6ff"/><rect x="3.5" y="9" width="8" height="4.2" fill="#f4f8ff"/></svg>
<svg style="left:885px;top:313px" width="5" height="3"><path d="M0 0 H5 L2.5 3Z" fill="#000"/></svg>
<svg style="left:898px;top:306px" width="16" height="16" viewBox="0 0 16 16"><rect x="0.8" y="0.8" width="14.4" height="14.4" fill="#e8f4e8" stroke="#1a8a2a" stroke-width="1.6" stroke-dasharray="1.2 0.6"/><path d="M4 4 L12 12 M12 4 L4 12" stroke="#2a9a3a" stroke-width="2.6"/><path d="M4 4 L12 12 M12 4 L4 12" stroke="#9ad8a0" stroke-width="1" stroke-dasharray="1 1"/></svg>
<svg style="left:920px;top:306px" width="16" height="14" viewBox="0 0 16 14"><path d="M5 0.7 H12.5 L11 6 H3.5Z" fill="#fff" stroke="#000" stroke-width="1.2"/><path d="M0.7 11 L3.5 6 H15.3 V10.5 L13 13.3 H0.7Z" fill="#8ac4f4" stroke="#000" stroke-width="1.2"/><path d="M1.5 11.5 H13" stroke="#e8f4ff" stroke-width="1.5"/><rect x="9" y="8.5" width="2.5" height="1.2" fill="#e00"/></svg>
<svg style="left:946px;top:306px" width="13" height="16" viewBox="0 0 13 16"><path d="M0.5 0.5 H8 L12.5 5 V15.5 H0.5Z" fill="#fff" stroke="#000"/><path d="M8 0.5 V5 H12.5" fill="none" stroke="#000"/></svg>
<div class="r" style="left:973px;top:308px;width:14px;height:11px;box-sizing:border-box;border:2px solid #000"></div>
<svg style="left:1015px;top:306px" width="17" height="17" viewBox="0 0 17 17"><rect x="5.5" y="0.5" width="11" height="14" fill="#7a7a7a" stroke="#000"/><path d="M8.5 3 L16 1 V14.5 L8.5 16.5Z" fill="#8c8c3c" stroke="#000" stroke-width="0.8"/><path d="M8 3 V16.5" stroke="#fff" stroke-width="1.2"/><rect x="10" y="9" width="2" height="1" fill="#ddd"/><path d="M0.5 8.5 L4.5 5 V7 H9 V10 H4.5 V12Z" fill="#30d8f0" stroke="#087890" stroke-width="0.5"/></svg>
<div class="r" style="left:556px;top:327px;width:801px;height:418px;background:#808080"></div>
<div class="r" style="left:556px;top:327px;width:801px;height:1px;background:#696969"></div>
<div class="r" style="left:556px;top:328px;width:801px;height:1px;background:#707070"></div>
<div class="r" style="left:556px;top:327px;width:1px;height:418px;background:#696969"></div>
<div class="r" style="left:560px;top:339px;width:796px;height:406px;background:#fff"></div>
<div class="r" style="left:560px;top:339px;width:794px;height:1px;background:#000"></div>
<div class="r" style="left:560px;top:339px;width:1px;height:406px;background:#000"></div>
<div class="r" style="left:1353px;top:339px;width:3px;height:406px;background:#000"></div>
<div class="r" style="left:586px;top:396px;width:20px;height:1px;background:#808080"></div>
<div class="r" style="left:605px;top:377px;width:1px;height:20px;background:#808080"></div>
<div class="r" style="left:1309px;top:396px;width:21px;height:1px;background:#808080"></div>
<div class="r" style="left:1309px;top:377px;width:1px;height:20px;background:#808080"></div>
<div class="r" style="left:1357px;top:329px;width:18px;height:416px;background:#f0f0f0"></div>
<div class="r" style="left:1359px;top:346px;width:14px;height:287px;background:#cdcdcd"></div>
<svg style="left:1361px;top:334px" width="9" height="6"><path d="M0.5 5.5 L4.5 1.5 L8.5 5.5" fill="none" stroke="#505050" stroke-width="1.6"/></svg>
<svg style="left:1361px;top:733px" width="9" height="6"><path d="M0.5 0.5 L4.5 4.5 L8.5 0.5" fill="none" stroke="#505050" stroke-width="1.6"/></svg>
<div class="r" style="left:556px;top:745px;width:820px;height:16px;background:#f0f0f0"></div>
<div class="r" style="left:575px;top:746px;width:757px;height:14px;background:#cdcdcd"></div>
<svg style="left:563px;top:749px" width="6" height="9"><path d="M5 0.5 L1 4.5 L5 8.5" fill="none" stroke="#505050" stroke-width="1.6"/></svg>
<svg style="left:1344px;top:749px" width="6" height="9"><path d="M1 0.5 L5 4.5 L1 8.5" fill="none" stroke="#505050" stroke-width="1.6"/></svg>
<div class="r" style="left:556px;top:761px;width:820px;height:21px;background:#f0f0f0"></div>
<div class="r" style="left:556px;top:765px;width:139px;height:1px;background:#a0a0a0"></div>
<div class="r" style="left:556px;top:765px;width:1px;height:16px;background:#a0a0a0"></div>
<div class="r" style="left:698px;top:765px;width:257px;height:1px;background:#a0a0a0"></div>
<div class="r" style="left:698px;top:765px;width:1px;height:16px;background:#a0a0a0"></div>
<div class="r" style="left:958px;top:765px;width:418px;height:1px;background:#a0a0a0"></div>
<div class="r" style="left:958px;top:765px;width:1px;height:16px;background:#a0a0a0"></div>
<div class="t" style="left:557px;top:767px;font-size:12px;line-height:12px;color:#000;font-weight:normal;font-family:'Liberation Sans',sans-serif;">页 1/1</div>
<svg style="left:1362px;top:768px" width="12" height="12"><path d="M11 3 L3 11 M11 7 L7 11 M11 10 L10 11" stroke="#a0a0a0" stroke-width="1"/></svg>
<svg style="left:620px;top:367px" width="87" height="87" viewBox="0 0 87 87"><g fill="#000" shape-rendering="crispEdges"><rect x="0.00" y="0.00" width="2.40" height="2.40"/><rect x="2.35" y="0.00" width="2.40" height="2.40"/><rect x="4.70" y="0.00" width="2.40" height="2.40"/><rect x="7.05" y="0.00" width="2.40" height="2.40"/><rect x="9.41" y="0.00" width="2.40" height="2.40"/><rect x="11.76" y="0.00" width="2.40" height="2.40"/><rect x="14.11" y="0.00" width="2.40" height="2.40"/><rect x="18.81" y="0.00" width="2.40" height="2.40"/><rect x="21.16" y="0.00" width="2.40" height="2.40"/><rect x="23.51" y="0.00" width="2.40" height="2.40"/><rect x="25.86" y="0.00" width="2.40" height="2.40"/><rect x="28.22" y="0.00" width="2.40" height="2.40"/><rect x="32.92" y="0.00" width="2.40" height="2.40"/><rect x="35.27" y="0.00" width="2.40" height="2.40"/><rect x="44.68" y="0.00" width="2.40" height="2.40"/><rect x="49.38" y="0.00" width="2.40" height="2.40"/><rect x="54.08" y="0.00" width="2.40" height="2.40"/><rect x="56.43" y="0.00" width="2.40" height="2.40"/><rect x="58.78" y="0.00" width="2.40" height="2.40"/><rect x="61.14" y="0.00" width="2.40" height="2.40"/><rect x="65.84" y="0.00" width="2.40" height="2.40"/><rect x="70.54" y="0.00" width="2.40" height="2.40"/><rect x="72.89" y="0.00" width="2.40" height="2.40"/><rect x="75.24" y="0.00" width="2.40" height="2.40"/><rect x="77.59" y="0.00" width="2.40" height="2.40"/><rect x="79.95" y="0.00" width="2.40" height="2.40"/><rect x="82.30" y="0.00" width="2.40" height="2.40"/><rect x="84.65" y="0.00" width="2.40" height="2.40"/><rect x="0.00" y="2.35" width="2.40" height="2.40"/><rect x="14.11" y="2.35" width="2.40" height="2.40"/><rect x="28.22" y="2.35" width="2.40" height="2.40"/><rect x="32.92" y="2.35" width="2.40" height="2.40"/><rect x="35.27" y="2.35" width="2.40" height="2.40"/><rect x="39.97" y="2.35" width="2.40" height="2.40"/><rect x="42.32" y="2.35" width="2.40" height="2.40"/><rect x="44.68" y="2.35" width="2.40" height="2.40"/><rect x="56.43" y="2.35" width="2.40" height="2.40"/><rect x="65.84" y="2.35" width="2.40" height="2.40"/><rect x="70.54" y="2.35" width="2.40" height="2.40"/><rect x="84.65" y="2.35" width="2.40" height="2.40"/><rect x="0.00" y="4.70" width="2.40" height="2.40"/><rect x="4.70" y="4.70" width="2.40" height="2.40"/><rect x="7.05" y="4.70" width="2.40" height="2.40"/><rect x="9.41" y="4.70" width="2.40" height="2.40"/><rect x="14.11" y="4.70" width="2.40" height="2.40"/><rect x="18.81" y="4.70" width="2.40" height="2.40"/><rect x="23.51" y="4.70" width="2.40" height="2.40"/><rect x="25.86" y="4.70" width="2.40" height="2.40"/><rect x="28.22" y="4.70" width="2.40" height="2.40"/><rect x="32.92" y="4.70" width="2.40" height="2.40"/><rect x="35.27" y="4.70" width="2.40" height="2.40"/><rect x="47.03" y="4.70" width="2.40" height="2.40"/><rect x="49.38" y="4.70" width="2.40" height="2.40"/><rect x="51.73" y="4.70" width="2.40" height="2.40"/><rect x="58.78" y="4.70" width="2.40" height="2.40"/><rect x="61.14" y="4.70" width="2.40" height="2.40"/><rect x="63.49" y="4.70" width="2.40" height="2.40"/><rect x="65.84" y="4.70" width="2.40" height="2.40"/><rect x="70.54" y="4.70" width="2.40" height="2.40"/><rect x="75.24" y="4.70" width="2.40" height="2.40"/><rect x="77.59" y="4.70" width="2.40" height="2.40"/><rect x="79.95" y="4.70" width="2.40" height="2.40"/><rect x="84.65" y="4.70" width="2.40" height="2.40"/><rect x="0.00" y="7.05" width="2.40" height="2.40"/><rect x="4.70" y="7.05" width="2.40" height="2.40"/><rect x="7.05" y="7.05" width="2.40" height="2.40"/><rect x="9.41" y="7.05" width="2.40" height="2.40"/><rect x="14.11" y="7.05" width="2.40" height="2.40"/><rect x="21.16" y="7.05" width="2.40" height="2.40"/><rect x="23.51" y="7.05" width="2.40" height="2.40"/><rect x="25.86" y="7.05" width="2.40" height="2.40"/><rect x="30.57" y="7.05" width="2.40" height="2.40"/><rect x="32.92" y="7.05" width="2.40" height="2.40"/><rect x="35.27" y="7.05" width="2.40" height="2.40"/><rect x="37.62" y="7.05" width="2.40" height="2.40"/><rect x="39.97" y="7.05" width="2.40" height="2.40"/><rect x="42.32" y="7.05" width="2.40" height="2.40"/><rect x="44.68" y="7.05" width="2.40" height="2.40"/><rect x="47.03" y="7.05" width="2.40" height="2.40"/><rect x="49.38" y="7.05" width="2.40" height="2.40"/><rect x="51.73" y="7.05" width="2.40" height="2.40"/><rect x="54.08" y="7.05" width="2.40" height="2.40"/><rect x="61.14" y="7.05" width="2.40" height="2.40"/><rect x="63.49" y="7.05" width="2.40" height="2.40"/><rect x="65.84" y="7.05" width="2.40" height="2.40"/><rect x="70.54" y="7.05" width="2.40" height="2.40"/><rect x="75.24" y="7.05" width="2.40" height="2.40"/><rect x="77.59" y="7.05" width="2.40" height="2.40"/><rect x="79.95" y="7.05" width="2.40" height="2.40"/><rect x="84.65" y="7.05" width="2.40" height="2.40"/><rect x="0.00" y="9.41" width="2.40" height="2.40"/><rect x="4.70" y="9.41" width="2.40" height="2.40"/><rect x="7.05" y="9.41" width="2.40" height="2.40"/><rect x="9.41" y="9.41" width="2.40" height="2.40"/><rect x="14.11" y="9.41" width="2.40" height="2.40"/><rect x="21.16" y="9.41" width="2.40" height="2.40"/><rect x="32.92" y="9.41" width="2.40" height="2.40"/><rect x="35.27" y="9.41" width="2.40" height="2.40"/><rect x="37.62" y="9.41" width="2.40" height="2.40"/><rect x="47.03" y="9.41" width="2.40" height="2.40"/><rect x="49.38" y="9.41" width="2.40" height="2.40"/><rect x="65.84" y="9.41" width="2.40" height="2.40"/><rect x="70.54" y="9.41" width="2.40" height="2.40"/><rect x="75.24" y="9.41" width="2.40" height="2.40"/><rect x="77.59" y="9.41" width="2.40" height="2.40"/><rect x="79.95" y="9.41" width="2.40" height="2.40"/><rect x="84.65" y="9.41" width="2.40" height="2.40"/><rect x="0.00" y="11.76" width="2.40" height="2.40"/><rect x="14.11" y="11.76" width="2.40" height="2.40"/><rect x="18.81" y="11.76" width="2.40" height="2.40"/><rect x="28.22" y="11.76" width="2.40" height="2.40"/><rect x="35.27" y="11.76" width="2.40" height="2.40"/><rect x="47.03" y="11.76" width="2.40" height="2.40"/><rect x="49.38" y="11.76" width="2.40" height="2.40"/><rect x="54.08" y="11.76" width="2.40" height="2.40"/><rect x="61.14" y="11.76" width="2.40" height="2.40"/><rect x="63.49" y="11.76" width="2.40" height="2.40"/><rect x="70.54" y="11.76" width="2.40" height="2.40"/><rect x="84.65" y="11.76" width="2.40" height="2.40"/><rect x="0.00" y="14.11" width="2.40" height="2.40"/><rect x="2.35" y="14.11" width="2.40" height="2.40"/><rect x="4.70" y="14.11" width="2.40" height="2.40"/><rect x="7.05" y="14.11" width="2.40" height="2.40"/><rect x="9.41" y="14.11" width="2.40" height="2.40"/><rect x="11.76" y="14.11" width="2.40" height="2.40"/><rect x="14.11" y="14.11" width="2.40" height="2.40"/><rect x="23.51" y="14.11" width="2.40" height="2.40"/><rect x="30.57" y="14.11" width="2.40" height="2.40"/><rect x="32.92" y="14.11" width="2.40" height="2.40"/><rect x="35.27" y="14.11" width="2.40" height="2.40"/><rect x="37.62" y="14.11" width="2.40" height="2.40"/><rect x="42.32" y="14.11" width="2.40" height="2.40"/><rect x="44.68" y="14.11" width="2.40" height="2.40"/><rect x="47.03" y="14.11" width="2.40" height="2.40"/><rect x="51.73" y="14.11" width="2.40" height="2.40"/><rect x="54.08" y="14.11" width="2.40" height="2.40"/><rect x="61.14" y="14.11" width="2.40" height="2.40"/><rect x="70.54" y="14.11" width="2.40" height="2.40"/><rect x="72.89" y="14.11" width="2.40" height="2.40"/><rect x="75.24" y="14.11" width="2.40" height="2.40"/><rect x="77.59" y="14.11" width="2.40" height="2.40"/><rect x="79.95" y="14.11" width="2.40" height="2.40"/><rect x="82.30" y="14.11" width="2.40" height="2.40"/><rect x="84.65" y="14.11" width="2.40" height="2.40"/><rect x="21.16" y="16.46" width="2.40" height="2.40"/><rect x="23.51" y="16.46" width="2.40" height="2.40"/><rect x="37.62" y="16.46" width="2.40" height="2.40"/><rect x="49.38" y="16.46" width="2.40" height="2.40"/><rect x="54.08" y="16.46" width="2.40" height="2.40"/><rect x="65.84" y="16.46" width="2.40" height="2.40"/><rect x="0.00" y="18.81" width="2.40" height="2.40"/><rect x="9.41" y="18.81" width="2.40" height="2.40"/><rect x="16.46" y="18.81" width="2.40" height="2.40"/><rect x="23.51" y="18.81" width="2.40" height="2.40"/><rect x="28.22" y="18.81" width="2.40" height="2.40"/><rect x="30.57" y="18.81" width="2.40" height="2.40"/><rect x="37.62" y="18.81" width="2.40" height="2.40"/><rect x="39.97" y="18.81" width="2.40" height="2.40"/><rect x="44.68" y="18.81" width="2.40" height="2.40"/><rect x="47.03" y="18.81" width="2.40" height="2.40"/><rect x="49.38" y="18.81" width="2.40" height="2.40"/><rect x="54.08" y="18.81" width="2.40" height="2.40"/><rect x="58.78" y="18.81" width="2.40" height="2.40"/><rect x="61.14" y="18.81" width="2.40" height="2.40"/><rect x="63.49" y="18.81" width="2.40" height="2.40"/><rect x="70.54" y="18.81" width="2.40" height="2.40"/><rect x="79.95" y="18.81" width="2.40" height="2.40"/><rect x="82.30" y="18.81" width="2.40" height="2.40"/><rect x="84.65" y="18.81" width="2.40" height="2.40"/><rect x="2.35" y="21.16" width="2.40" height="2.40"/><rect x="4.70" y="21.16" width="2.40" height="2.40"/><rect x="7.05" y="21.16" width="2.40" height="2.40"/><rect x="14.11" y="21.16" width="2.40" height="2.40"/><rect x="16.46" y="21.16" width="2.40" height="2.40"/><rect x="25.86" y="21.16" width="2.40" height="2.40"/><rect x="28.22" y="21.16" width="2.40" height="2.40"/><rect x="32.92" y="21.16" width="2.40" height="2.40"/><rect x="35.27" y="21.16" width="2.40" height="2.40"/><rect x="44.68" y="21.16" width="2.40" height="2.40"/><rect x="49.38" y="21.16" width="2.40" height="2.40"/><rect x="54.08" y="21.16" width="2.40" height="2.40"/><rect x="56.43" y="21.16" width="2.40" height="2.40"/><rect x="63.49" y="21.16" width="2.40" height="2.40"/><rect x="65.84" y="21.16" width="2.40" height="2.40"/><rect x="70.54" y="21.16" width="2.40" height="2.40"/><rect x="72.89" y="21.16" width="2.40" height="2.40"/><rect x="75.24" y="21.16" width="2.40" height="2.40"/><rect x="77.59" y="21.16" width="2.40" height="2.40"/><rect x="79.95" y="21.16" width="2.40" height="2.40"/><rect x="82.30" y="21.16" width="2.40" height="2.40"/><rect x="84.65" y="21.16" width="2.40" height="2.40"/><rect x="2.35" y="23.51" width="2.40" height="2.40"/><rect x="7.05" y="23.51" width="2.40" height="2.40"/><rect x="9.41" y="23.51" width="2.40" height="2.40"/><rect x="11.76" y="23.51" width="2.40" height="2.40"/><rect x="14.11" y="23.51" width="2.40" height="2.40"/><rect x="16.46" y="23.51" width="2.40" height="2.40"/><rect x="23.51" y="23.51" width="2.40" height="2.40"/><rect x="25.86" y="23.51" width="2.40" height="2.40"/><rect x="30.57" y="23.51" width="2.40" height="2.40"/><rect x="35.27" y="23.51" width="2.40" height="2.40"/><rect x="37.62" y="23.51" width="2.40" height="2.40"/><rect x="42.32" y="23.51" width="2.40" height="2.40"/><rect x="51.73" y="23.51" width="2.40" height="2.40"/><rect x="61.14" y="23.51" width="2.40" height="2.40"/><rect x="63.49" y="23.51" width="2.40" height="2.40"/><rect x="65.84" y="23.51" width="2.40" height="2.40"/><rect x="68.19" y="23.51" width="2.40" height="2.40"/><rect x="70.54" y="23.51" width="2.40" height="2.40"/><rect x="75.24" y="23.51" width="2.40" height="2.40"/><rect x="77.59" y="23.51" width="2.40" height="2.40"/><rect x="79.95" y="23.51" width="2.40" height="2.40"/><rect x="2.35" y="25.86" width="2.40" height="2.40"/><rect x="4.70" y="25.86" width="2.40" height="2.40"/><rect x="7.05" y="25.86" width="2.40" height="2.40"/><rect x="9.41" y="25.86" width="2.40" height="2.40"/><rect x="11.76" y="25.86" width="2.40" height="2.40"/><rect x="14.11" y="25.86" width="2.40" height="2.40"/><rect x="16.46" y="25.86" width="2.40" height="2.40"/><rect x="25.86" y="25.86" width="2.40" height="2.40"/><rect x="30.57" y="25.86" width="2.40" height="2.40"/><rect x="32.92" y="25.86" width="2.40" height="2.40"/><rect x="35.27" y="25.86" width="2.40" height="2.40"/><rect x="37.62" y="25.86" width="2.40" height="2.40"/><rect x="39.97" y="25.86" width="2.40" height="2.40"/><rect x="44.68" y="25.86" width="2.40" height="2.40"/><rect x="49.38" y="25.86" width="2.40" height="2.40"/><rect x="51.73" y="25.86" width="2.40" height="2.40"/><rect x="54.08" y="25.86" width="2.40" height="2.40"/><rect x="56.43" y="25.86" width="2.40" height="2.40"/><rect x="58.78" y="25.86" width="2.40" height="2.40"/><rect x="61.14" y="25.86" width="2.40" height="2.40"/><rect x="63.49" y="25.86" width="2.40" height="2.40"/><rect x="65.84" y="25.86" width="2.40" height="2.40"/><rect x="82.30" y="25.86" width="2.40" height="2.40"/><rect x="84.65" y="25.86" width="2.40" height="2.40"/><rect x="2.35" y="28.22" width="2.40" height="2.40"/><rect x="9.41" y="28.22" width="2.40" height="2.40"/><rect x="23.51" y="28.22" width="2.40" height="2.40"/><rect x="47.03" y="28.22" width="2.40" height="2.40"/><rect x="49.38" y="28.22" width="2.40" height="2.40"/><rect x="51.73" y="28.22" width="2.40" height="2.40"/><rect x="54.08" y="28.22" width="2.40" height="2.40"/><rect x="56.43" y="28.22" width="2.40" height="2.40"/><rect x="70.54" y="28.22" width="2.40" height="2.40"/><rect x="72.89" y="28.22" width="2.40" height="2.40"/><rect x="0.00" y="30.57" width="2.40" height="2.40"/><rect x="4.70" y="30.57" width="2.40" height="2.40"/><rect x="7.05" y="30.57" width="2.40" height="2.40"/><rect x="9.41" y="30.57" width="2.40" height="2.40"/><rect x="14.11" y="30.57" width="2.40" height="2.40"/><rect x="21.16" y="30.57" width="2.40" height="2.40"/><rect x="23.51" y="30.57" width="2.40" height="2.40"/><rect x="25.86" y="30.57" width="2.40" height="2.40"/><rect x="37.62" y="30.57" width="2.40" height="2.40"/><rect x="39.97" y="30.57" width="2.40" height="2.40"/><rect x="42.32" y="30.57" width="2.40" height="2.40"/><rect x="47.03" y="30.57" width="2.40" height="2.40"/><rect x="51.73" y="30.57" width="2.40" height="2.40"/><rect x="54.08" y="30.57" width="2.40" height="2.40"/><rect x="56.43" y="30.57" width="2.40" height="2.40"/><rect x="65.84" y="30.57" width="2.40" height="2.40"/><rect x="70.54" y="30.57" width="2.40" height="2.40"/><rect x="72.89" y="30.57" width="2.40" height="2.40"/><rect x="75.24" y="30.57" width="2.40" height="2.40"/><rect x="79.95" y="30.57" width="2.40" height="2.40"/><rect x="0.00" y="32.92" width="2.40" height="2.40"/><rect x="2.35" y="32.92" width="2.40" height="2.40"/><rect x="9.41" y="32.92" width="2.40" height="2.40"/><rect x="11.76" y="32.92" width="2.40" height="2.40"/><rect x="14.11" y="32.92" width="2.40" height="2.40"/><rect x="18.81" y="32.92" width="2.40" height="2.40"/><rect x="23.51" y="32.92" width="2.40" height="2.40"/><rect x="30.57" y="32.92" width="2.40" height="2.40"/><rect x="42.32" y="32.92" width="2.40" height="2.40"/><rect x="47.03" y="32.92" width="2.40" height="2.40"/><rect x="49.38" y="32.92" width="2.40" height="2.40"/><rect x="51.73" y="32.92" width="2.40" height="2.40"/><rect x="54.08" y="32.92" width="2.40" height="2.40"/><rect x="56.43" y="32.92" width="2.40" height="2.40"/><rect x="58.78" y="32.92" width="2.40" height="2.40"/><rect x="61.14" y="32.92" width="2.40" height="2.40"/><rect x="63.49" y="32.92" width="2.40" height="2.40"/><rect x="65.84" y="32.92" width="2.40" height="2.40"/><rect x="70.54" y="32.92" width="2.40" height="2.40"/><rect x="77.59" y="32.92" width="2.40" height="2.40"/><rect x="0.00" y="35.27" width="2.40" height="2.40"/><rect x="2.35" y="35.27" width="2.40" height="2.40"/><rect x="4.70" y="35.27" width="2.40" height="2.40"/><rect x="11.76" y="35.27" width="2.40" height="2.40"/><rect x="14.11" y="35.27" width="2.40" height="2.40"/><rect x="16.46" y="35.27" width="2.40" height="2.40"/><rect x="18.81" y="35.27" width="2.40" height="2.40"/><rect x="21.16" y="35.27" width="2.40" height="2.40"/><rect x="25.86" y="35.27" width="2.40" height="2.40"/><rect x="30.57" y="35.27" width="2.40" height="2.40"/><rect x="32.92" y="35.27" width="2.40" height="2.40"/><rect x="37.62" y="35.27" width="2.40" height="2.40"/><rect x="39.97" y="35.27" width="2.40" height="2.40"/><rect x="61.14" y="35.27" width="2.40" height="2.40"/><rect x="65.84" y="35.27" width="2.40" height="2.40"/><rect x="72.89" y="35.27" width="2.40" height="2.40"/><rect x="75.24" y="35.27" width="2.40" height="2.40"/><rect x="79.95" y="35.27" width="2.40" height="2.40"/><rect x="82.30" y="35.27" width="2.40" height="2.40"/><rect x="84.65" y="35.27" width="2.40" height="2.40"/><rect x="0.00" y="37.62" width="2.40" height="2.40"/><rect x="7.05" y="37.62" width="2.40" height="2.40"/><rect x="11.76" y="37.62" width="2.40" height="2.40"/><rect x="16.46" y="37.62" width="2.40" height="2.40"/><rect x="18.81" y="37.62" width="2.40" height="2.40"/><rect x="21.16" y="37.62" width="2.40" height="2.40"/><rect x="23.51" y="37.62" width="2.40" height="2.40"/><rect x="28.22" y="37.62" width="2.40" height="2.40"/><rect x="30.57" y="37.62" width="2.40" height="2.40"/><rect x="37.62" y="37.62" width="2.40" height="2.40"/><rect x="39.97" y="37.62" width="2.40" height="2.40"/><rect x="42.32" y="37.62" width="2.40" height="2.40"/><rect x="44.68" y="37.62" width="2.40" height="2.40"/><rect x="47.03" y="37.62" width="2.40" height="2.40"/><rect x="49.38" y="37.62" width="2.40" height="2.40"/><rect x="51.73" y="37.62" width="2.40" height="2.40"/><rect x="54.08" y="37.62" width="2.40" height="2.40"/><rect x="63.49" y="37.62" width="2.40" height="2.40"/><rect x="65.84" y="37.62" width="2.40" height="2.40"/><rect x="70.54" y="37.62" width="2.40" height="2.40"/><rect x="72.89" y="37.62" width="2.40" height="2.40"/><rect x="75.24" y="37.62" width="2.40" height="2.40"/><rect x="77.59" y="37.62" width="2.40" height="2.40"/><rect x="82.30" y="37.62" width="2.40" height="2.40"/><rect x="4.70" y="39.97" width="2.40" height="2.40"/><rect x="7.05" y="39.97" width="2.40" height="2.40"/><rect x="9.41" y="39.97" width="2.40" height="2.40"/><rect x="11.76" y="39.97" width="2.40" height="2.40"/><rect x="14.11" y="39.97" width="2.40" height="2.40"/><rect x="23.51" y="39.97" width="2.40" height="2.40"/><rect x="25.86" y="39.97" width="2.40" height="2.40"/><rect x="32.92" y="39.97" width="2.40" height="2.40"/><rect x="37.62" y="39.97" width="2.40" height="2.40"/><rect x="39.97" y="39.97" width="2.40" height="2.40"/><rect x="51.73" y="39.97" width="2.40" height="2.40"/><rect x="54.08" y="39.97" width="2.40" height="2.40"/><rect x="56.43" y="39.97" width="2.40" height="2.40"/><rect x="72.89" y="39.97" width="2.40" height="2.40"/><rect x="77.59" y="39.97" width="2.40" height="2.40"/><rect x="82.30" y="39.97" width="2.40" height="2.40"/><rect x="2.35" y="42.32" width="2.40" height="2.40"/><rect x="4.70" y="42.32" width="2.40" height="2.40"/><rect x="7.05" y="42.32" width="2.40" height="2.40"/><rect x="14.11" y="42.32" width="2.40" height="2.40"/><rect x="16.46" y="42.32" width="2.40" height="2.40"/><rect x="23.51" y="42.32" width="2.40" height="2.40"/><rect x="25.86" y="42.32" width="2.40" height="2.40"/><rect x="30.57" y="42.32" width="2.40" height="2.40"/><rect x="32.92" y="42.32" width="2.40" height="2.40"/><rect x="35.27" y="42.32" width="2.40" height="2.40"/><rect x="44.68" y="42.32" width="2.40" height="2.40"/><rect x="47.03" y="42.32" width="2.40" height="2.40"/><rect x="49.38" y="42.32" width="2.40" height="2.40"/><rect x="56.43" y="42.32" width="2.40" height="2.40"/><rect x="58.78" y="42.32" width="2.40" height="2.40"/><rect x="61.14" y="42.32" width="2.40" height="2.40"/><rect x="65.84" y="42.32" width="2.40" height="2.40"/><rect x="68.19" y="42.32" width="2.40" height="2.40"/><rect x="75.24" y="42.32" width="2.40" height="2.40"/><rect x="77.59" y="42.32" width="2.40" height="2.40"/><rect x="79.95" y="42.32" width="2.40" height="2.40"/><rect x="82.30" y="42.32" width="2.40" height="2.40"/><rect x="0.00" y="44.68" width="2.40" height="2.40"/><rect x="9.41" y="44.68" width="2.40" height="2.40"/><rect x="14.11" y="44.68" width="2.40" height="2.40"/><rect x="18.81" y="44.68" width="2.40" height="2.40"/><rect x="21.16" y="44.68" width="2.40" height="2.40"/><rect x="25.86" y="44.68" width="2.40" height="2.40"/><rect x="30.57" y="44.68" width="2.40" height="2.40"/><rect x="32.92" y="44.68" width="2.40" height="2.40"/><rect x="35.27" y="44.68" width="2.40" height="2.40"/><rect x="37.62" y="44.68" width="2.40" height="2.40"/><rect x="44.68" y="44.68" width="2.40" height="2.40"/><rect x="47.03" y="44.68" width="2.40" height="2.40"/><rect x="49.38" y="44.68" width="2.40" height="2.40"/><rect x="54.08" y="44.68" width="2.40" height="2.40"/><rect x="56.43" y="44.68" width="2.40" height="2.40"/><rect x="58.78" y="44.68" width="2.40" height="2.40"/><rect x="61.14" y="44.68" width="2.40" height="2.40"/><rect x="75.24" y="44.68" width="2.40" height="2.40"/><rect x="77.59" y="44.68" width="2.40" height="2.40"/><rect x="84.65" y="44.68" width="2.40" height="2.40"/><rect x="2.35" y="47.03" width="2.40" height="2.40"/><rect x="4.70" y="47.03" width="2.40" height="2.40"/><rect x="7.05" y="47.03" width="2.40" height="2.40"/><rect x="9.41" y="47.03" width="2.40" height="2.40"/><rect x="11.76" y="47.03" width="2.40" height="2.40"/><rect x="14.11" y="47.03" width="2.40" height="2.40"/><rect x="16.46" y="47.03" width="2.40" height="2.40"/><rect x="21.16" y="47.03" width="2.40" height="2.40"/><rect x="25.86" y="47.03" width="2.40" height="2.40"/><rect x="28.22" y="47.03" width="2.40" height="2.40"/><rect x="35.27" y="47.03" width="2.40" height="2.40"/><rect x="37.62" y="47.03" width="2.40" height="2.40"/><rect x="39.97" y="47.03" width="2.40" height="2.40"/><rect x="42.32" y="47.03" width="2.40" height="2.40"/><rect x="47.03" y="47.03" width="2.40" height="2.40"/><rect x="49.38" y="47.03" width="2.40" height="2.40"/><rect x="54.08" y="47.03" width="2.40" height="2.40"/><rect x="56.43" y="47.03" width="2.40" height="2.40"/><rect x="63.49" y="47.03" width="2.40" height="2.40"/><rect x="65.84" y="47.03" width="2.40" height="2.40"/><rect x="68.19" y="47.03" width="2.40" height="2.40"/><rect x="72.89" y="47.03" width="2.40" height="2.40"/><rect x="79.95" y="47.03" width="2.40" height="2.40"/><rect x="82.30" y="47.03" width="2.40" height="2.40"/><rect x="2.35" y="49.38" width="2.40" height="2.40"/><rect x="7.05" y="49.38" width="2.40" height="2.40"/><rect x="9.41" y="49.38" width="2.40" height="2.40"/><rect x="11.76" y="49.38" width="2.40" height="2.40"/><rect x="23.51" y="49.38" width="2.40" height="2.40"/><rect x="25.86" y="49.38" width="2.40" height="2.40"/><rect x="28.22" y="49.38" width="2.40" height="2.40"/><rect x="35.27" y="49.38" width="2.40" height="2.40"/><rect x="37.62" y="49.38" width="2.40" height="2.40"/><rect x="39.97" y="49.38" width="2.40" height="2.40"/><rect x="42.32" y="49.38" width="2.40" height="2.40"/><rect x="47.03" y="49.38" width="2.40" height="2.40"/><rect x="61.14" y="49.38" width="2.40" height="2.40"/><rect x="63.49" y="49.38" width="2.40" height="2.40"/><rect x="65.84" y="49.38" width="2.40" height="2.40"/><rect x="70.54" y="49.38" width="2.40" height="2.40"/><rect x="72.89" y="49.38" width="2.40" height="2.40"/><rect x="77.59" y="49.38" width="2.40" height="2.40"/><rect x="79.95" y="49.38" width="2.40" height="2.40"/><rect x="82.30" y="49.38" width="2.40" height="2.40"/><rect x="0.00" y="51.73" width="2.40" height="2.40"/><rect x="9.41" y="51.73" width="2.40" height="2.40"/><rect x="11.76" y="51.73" width="2.40" height="2.40"/><rect x="14.11" y="51.73" width="2.40" height="2.40"/><rect x="16.46" y="51.73" width="2.40" height="2.40"/><rect x="21.16" y="51.73" width="2.40" height="2.40"/><rect x="23.51" y="51.73" width="2.40" height="2.40"/><rect x="25.86" y="51.73" width="2.40" height="2.40"/><rect x="39.97" y="51.73" width="2.40" height="2.40"/><rect x="44.68" y="51.73" width="2.40" height="2.40"/><rect x="49.38" y="51.73" width="2.40" height="2.40"/><rect x="54.08" y="51.73" width="2.40" height="2.40"/><rect x="56.43" y="51.73" width="2.40" height="2.40"/><rect x="58.78" y="51.73" width="2.40" height="2.40"/><rect x="61.14" y="51.73" width="2.40" height="2.40"/><rect x="68.19" y="51.73" width="2.40" height="2.40"/><rect x="70.54" y="51.73" width="2.40" height="2.40"/><rect x="77.59" y="51.73" width="2.40" height="2.40"/><rect x="0.00" y="54.08" width="2.40" height="2.40"/><rect x="2.35" y="54.08" width="2.40" height="2.40"/><rect x="11.76" y="54.08" width="2.40" height="2.40"/><rect x="14.11" y="54.08" width="2.40" height="2.40"/><rect x="16.46" y="54.08" width="2.40" height="2.40"/><rect x="18.81" y="54.08" width="2.40" height="2.40"/><rect x="28.22" y="54.08" width="2.40" height="2.40"/><rect x="32.92" y="54.08" width="2.40" height="2.40"/><rect x="35.27" y="54.08" width="2.40" height="2.40"/><rect x="42.32" y="54.08" width="2.40" height="2.40"/><rect x="49.38" y="54.08" width="2.40" height="2.40"/><rect x="51.73" y="54.08" width="2.40" height="2.40"/><rect x="54.08" y="54.08" width="2.40" height="2.40"/><rect x="56.43" y="54.08" width="2.40" height="2.40"/><rect x="58.78" y="54.08" width="2.40" height="2.40"/><rect x="65.84" y="54.08" width="2.40" height="2.40"/><rect x="68.19" y="54.08" width="2.40" height="2.40"/><rect x="70.54" y="54.08" width="2.40" height="2.40"/><rect x="75.24" y="54.08" width="2.40" height="2.40"/><rect x="77.59" y="54.08" width="2.40" height="2.40"/><rect x="79.95" y="54.08" width="2.40" height="2.40"/><rect x="0.00" y="56.43" width="2.40" height="2.40"/><rect x="2.35" y="56.43" width="2.40" height="2.40"/><rect x="4.70" y="56.43" width="2.40" height="2.40"/><rect x="11.76" y="56.43" width="2.40" height="2.40"/><rect x="14.11" y="56.43" width="2.40" height="2.40"/><rect x="18.81" y="56.43" width="2.40" height="2.40"/><rect x="21.16" y="56.43" width="2.40" height="2.40"/><rect x="23.51" y="56.43" width="2.40" height="2.40"/><rect x="28.22" y="56.43" width="2.40" height="2.40"/><rect x="32.92" y="56.43" width="2.40" height="2.40"/><rect x="35.27" y="56.43" width="2.40" height="2.40"/><rect x="42.32" y="56.43" width="2.40" height="2.40"/><rect x="44.68" y="56.43" width="2.40" height="2.40"/><rect x="49.38" y="56.43" width="2.40" height="2.40"/><rect x="51.73" y="56.43" width="2.40" height="2.40"/><rect x="56.43" y="56.43" width="2.40" height="2.40"/><rect x="61.14" y="56.43" width="2.40" height="2.40"/><rect x="65.84" y="56.43" width="2.40" height="2.40"/><rect x="68.19" y="56.43" width="2.40" height="2.40"/><rect x="70.54" y="56.43" width="2.40" height="2.40"/><rect x="79.95" y="56.43" width="2.40" height="2.40"/><rect x="84.65" y="56.43" width="2.40" height="2.40"/><rect x="2.35" y="58.78" width="2.40" height="2.40"/><rect x="4.70" y="58.78" width="2.40" height="2.40"/><rect x="11.76" y="58.78" width="2.40" height="2.40"/><rect x="14.11" y="58.78" width="2.40" height="2.40"/><rect x="21.16" y="58.78" width="2.40" height="2.40"/><rect x="23.51" y="58.78" width="2.40" height="2.40"/><rect x="30.57" y="58.78" width="2.40" height="2.40"/><rect x="32.92" y="58.78" width="2.40" height="2.40"/><rect x="37.62" y="58.78" width="2.40" height="2.40"/><rect x="47.03" y="58.78" width="2.40" height="2.40"/><rect x="51.73" y="58.78" width="2.40" height="2.40"/><rect x="54.08" y="58.78" width="2.40" height="2.40"/><rect x="61.14" y="58.78" width="2.40" height="2.40"/><rect x="63.49" y="58.78" width="2.40" height="2.40"/><rect x="65.84" y="58.78" width="2.40" height="2.40"/><rect x="70.54" y="58.78" width="2.40" height="2.40"/><rect x="72.89" y="58.78" width="2.40" height="2.40"/><rect x="75.24" y="58.78" width="2.40" height="2.40"/><rect x="82.30" y="58.78" width="2.40" height="2.40"/><rect x="2.35" y="61.14" width="2.40" height="2.40"/><rect x="7.05" y="61.14" width="2.40" height="2.40"/><rect x="16.46" y="61.14" width="2.40" height="2.40"/><rect x="18.81" y="61.14" width="2.40" height="2.40"/><rect x="23.51" y="61.14" width="2.40" height="2.40"/><rect x="28.22" y="61.14" width="2.40" height="2.40"/><rect x="30.57" y="61.14" width="2.40" height="2.40"/><rect x="32.92" y="61.14" width="2.40" height="2.40"/><rect x="37.62" y="61.14" width="2.40" height="2.40"/><rect x="39.97" y="61.14" width="2.40" height="2.40"/><rect x="47.03" y="61.14" width="2.40" height="2.40"/><rect x="49.38" y="61.14" width="2.40" height="2.40"/><rect x="51.73" y="61.14" width="2.40" height="2.40"/><rect x="54.08" y="61.14" width="2.40" height="2.40"/><rect x="56.43" y="61.14" width="2.40" height="2.40"/><rect x="58.78" y="61.14" width="2.40" height="2.40"/><rect x="61.14" y="61.14" width="2.40" height="2.40"/><rect x="63.49" y="61.14" width="2.40" height="2.40"/><rect x="68.19" y="61.14" width="2.40" height="2.40"/><rect x="72.89" y="61.14" width="2.40" height="2.40"/><rect x="82.30" y="61.14" width="2.40" height="2.40"/><rect x="0.00" y="63.49" width="2.40" height="2.40"/><rect x="4.70" y="63.49" width="2.40" height="2.40"/><rect x="16.46" y="63.49" width="2.40" height="2.40"/><rect x="21.16" y="63.49" width="2.40" height="2.40"/><rect x="28.22" y="63.49" width="2.40" height="2.40"/><rect x="35.27" y="63.49" width="2.40" height="2.40"/><rect x="37.62" y="63.49" width="2.40" height="2.40"/><rect x="42.32" y="63.49" width="2.40" height="2.40"/><rect x="47.03" y="63.49" width="2.40" height="2.40"/><rect x="51.73" y="63.49" width="2.40" height="2.40"/><rect x="58.78" y="63.49" width="2.40" height="2.40"/><rect x="61.14" y="63.49" width="2.40" height="2.40"/><rect x="65.84" y="63.49" width="2.40" height="2.40"/><rect x="68.19" y="63.49" width="2.40" height="2.40"/><rect x="70.54" y="63.49" width="2.40" height="2.40"/><rect x="72.89" y="63.49" width="2.40" height="2.40"/><rect x="82.30" y="63.49" width="2.40" height="2.40"/><rect x="0.00" y="65.84" width="2.40" height="2.40"/><rect x="7.05" y="65.84" width="2.40" height="2.40"/><rect x="18.81" y="65.84" width="2.40" height="2.40"/><rect x="25.86" y="65.84" width="2.40" height="2.40"/><rect x="30.57" y="65.84" width="2.40" height="2.40"/><rect x="37.62" y="65.84" width="2.40" height="2.40"/><rect x="42.32" y="65.84" width="2.40" height="2.40"/><rect x="44.68" y="65.84" width="2.40" height="2.40"/><rect x="49.38" y="65.84" width="2.40" height="2.40"/><rect x="54.08" y="65.84" width="2.40" height="2.40"/><rect x="65.84" y="65.84" width="2.40" height="2.40"/><rect x="68.19" y="65.84" width="2.40" height="2.40"/><rect x="70.54" y="65.84" width="2.40" height="2.40"/><rect x="72.89" y="65.84" width="2.40" height="2.40"/><rect x="77.59" y="65.84" width="2.40" height="2.40"/><rect x="84.65" y="65.84" width="2.40" height="2.40"/><rect x="23.51" y="68.19" width="2.40" height="2.40"/><rect x="28.22" y="68.19" width="2.40" height="2.40"/><rect x="30.57" y="68.19" width="2.40" height="2.40"/><rect x="35.27" y="68.19" width="2.40" height="2.40"/><rect x="37.62" y="68.19" width="2.40" height="2.40"/><rect x="39.97" y="68.19" width="2.40" height="2.40"/><rect x="49.38" y="68.19" width="2.40" height="2.40"/><rect x="51.73" y="68.19" width="2.40" height="2.40"/><rect x="54.08" y="68.19" width="2.40" height="2.40"/><rect x="61.14" y="68.19" width="2.40" height="2.40"/><rect x="65.84" y="68.19" width="2.40" height="2.40"/><rect x="72.89" y="68.19" width="2.40" height="2.40"/><rect x="77.59" y="68.19" width="2.40" height="2.40"/><rect x="82.30" y="68.19" width="2.40" height="2.40"/><rect x="84.65" y="68.19" width="2.40" height="2.40"/><rect x="0.00" y="70.54" width="2.40" height="2.40"/><rect x="2.35" y="70.54" width="2.40" height="2.40"/><rect x="4.70" y="70.54" width="2.40" height="2.40"/><rect x="7.05" y="70.54" width="2.40" height="2.40"/><rect x="9.41" y="70.54" width="2.40" height="2.40"/><rect x="11.76" y="70.54" width="2.40" height="2.40"/><rect x="14.11" y="70.54" width="2.40" height="2.40"/><rect x="25.86" y="70.54" width="2.40" height="2.40"/><rect x="28.22" y="70.54" width="2.40" height="2.40"/><rect x="30.57" y="70.54" width="2.40" height="2.40"/><rect x="32.92" y="70.54" width="2.40" height="2.40"/><rect x="42.32" y="70.54" width="2.40" height="2.40"/><rect x="49.38" y="70.54" width="2.40" height="2.40"/><rect x="54.08" y="70.54" width="2.40" height="2.40"/><rect x="56.43" y="70.54" width="2.40" height="2.40"/><rect x="58.78" y="70.54" width="2.40" height="2.40"/><rect x="61.14" y="70.54" width="2.40" height="2.40"/><rect x="63.49" y="70.54" width="2.40" height="2.40"/><rect x="65.84" y="70.54" width="2.40" height="2.40"/><rect x="77.59" y="70.54" width="2.40" height="2.40"/><rect x="82.30" y="70.54" width="2.40" height="2.40"/><rect x="0.00" y="72.89" width="2.40" height="2.40"/><rect x="14.11" y="72.89" width="2.40" height="2.40"/><rect x="18.81" y="72.89" width="2.40" height="2.40"/><rect x="28.22" y="72.89" width="2.40" height="2.40"/><rect x="32.92" y="72.89" width="2.40" height="2.40"/><rect x="35.27" y="72.89" width="2.40" height="2.40"/><rect x="49.38" y="72.89" width="2.40" height="2.40"/><rect x="58.78" y="72.89" width="2.40" height="2.40"/><rect x="65.84" y="72.89" width="2.40" height="2.40"/><rect x="68.19" y="72.89" width="2.40" height="2.40"/><rect x="72.89" y="72.89" width="2.40" height="2.40"/><rect x="77.59" y="72.89" width="2.40" height="2.40"/><rect x="79.95" y="72.89" width="2.40" height="2.40"/><rect x="82.30" y="72.89" width="2.40" height="2.40"/><rect x="0.00" y="75.24" width="2.40" height="2.40"/><rect x="4.70" y="75.24" width="2.40" height="2.40"/><rect x="7.05" y="75.24" width="2.40" height="2.40"/><rect x="9.41" y="75.24" width="2.40" height="2.40"/><rect x="14.11" y="75.24" width="2.40" height="2.40"/><rect x="18.81" y="75.24" width="2.40" height="2.40"/><rect x="23.51" y="75.24" width="2.40" height="2.40"/><rect x="32.92" y="75.24" width="2.40" height="2.40"/><rect x="42.32" y="75.24" width="2.40" height="2.40"/><rect x="44.68" y="75.24" width="2.40" height="2.40"/><rect x="47.03" y="75.24" width="2.40" height="2.40"/><rect x="49.38" y="75.24" width="2.40" height="2.40"/><rect x="63.49" y="75.24" width="2.40" height="2.40"/><rect x="65.84" y="75.24" width="2.40" height="2.40"/><rect x="68.19" y="75.24" width="2.40" height="2.40"/><rect x="72.89" y="75.24" width="2.40" height="2.40"/><rect x="75.24" y="75.24" width="2.40" height="2.40"/><rect x="77.59" y="75.24" width="2.40" height="2.40"/><rect x="79.95" y="75.24" width="2.40" height="2.40"/><rect x="82.30" y="75.24" width="2.40" height="2.40"/><rect x="84.65" y="75.24" width="2.40" height="2.40"/><rect x="0.00" y="77.59" width="2.40" height="2.40"/><rect x="4.70" y="77.59" width="2.40" height="2.40"/><rect x="7.05" y="77.59" width="2.40" height="2.40"/><rect x="9.41" y="77.59" width="2.40" height="2.40"/><rect x="14.11" y="77.59" width="2.40" height="2.40"/><rect x="18.81" y="77.59" width="2.40" height="2.40"/><rect x="21.16" y="77.59" width="2.40" height="2.40"/><rect x="25.86" y="77.59" width="2.40" height="2.40"/><rect x="32.92" y="77.59" width="2.40" height="2.40"/><rect x="37.62" y="77.59" width="2.40" height="2.40"/><rect x="42.32" y="77.59" width="2.40" height="2.40"/><rect x="44.68" y="77.59" width="2.40" height="2.40"/><rect x="47.03" y="77.59" width="2.40" height="2.40"/><rect x="54.08" y="77.59" width="2.40" height="2.40"/><rect x="56.43" y="77.59" width="2.40" height="2.40"/><rect x="58.78" y="77.59" width="2.40" height="2.40"/><rect x="63.49" y="77.59" width="2.40" height="2.40"/><rect x="65.84" y="77.59" width="2.40" height="2.40"/><rect x="68.19" y="77.59" width="2.40" height="2.40"/><rect x="72.89" y="77.59" width="2.40" height="2.40"/><rect x="77.59" y="77.59" width="2.40" height="2.40"/><rect x="79.95" y="77.59" width="2.40" height="2.40"/><rect x="84.65" y="77.59" width="2.40" height="2.40"/><rect x="0.00" y="79.95" width="2.40" height="2.40"/><rect x="4.70" y="79.95" width="2.40" height="2.40"/><rect x="7.05" y="79.95" width="2.40" height="2.40"/><rect x="9.41" y="79.95" width="2.40" height="2.40"/><rect x="14.11" y="79.95" width="2.40" height="2.40"/><rect x="18.81" y="79.95" width="2.40" height="2.40"/><rect x="21.16" y="79.95" width="2.40" height="2.40"/><rect x="25.86" y="79.95" width="2.40" height="2.40"/><rect x="30.57" y="79.95" width="2.40" height="2.40"/><rect x="32.92" y="79.95" width="2.40" height="2.40"/><rect x="35.27" y="79.95" width="2.40" height="2.40"/><rect x="42.32" y="79.95" width="2.40" height="2.40"/><rect x="47.03" y="79.95" width="2.40" height="2.40"/><rect x="49.38" y="79.95" width="2.40" height="2.40"/><rect x="61.14" y="79.95" width="2.40" height="2.40"/><rect x="63.49" y="79.95" width="2.40" height="2.40"/><rect x="65.84" y="79.95" width="2.40" height="2.40"/><rect x="75.24" y="79.95" width="2.40" height="2.40"/><rect x="77.59" y="79.95" width="2.40" height="2.40"/><rect x="84.65" y="79.95" width="2.40" height="2.40"/><rect x="0.00" y="82.30" width="2.40" height="2.40"/><rect x="14.11" y="82.30" width="2.40" height="2.40"/><rect x="18.81" y="82.30" width="2.40" height="2.40"/><rect x="21.16" y="82.30" width="2.40" height="2.40"/><rect x="23.51" y="82.30" width="2.40" height="2.40"/><rect x="28.22" y="82.30" width="2.40" height="2.40"/><rect x="30.57" y="82.30" width="2.40" height="2.40"/><rect x="32.92" y="82.30" width="2.40" height="2.40"/><rect x="39.97" y="82.30" width="2.40" height="2.40"/><rect x="44.68" y="82.30" width="2.40" height="2.40"/><rect x="47.03" y="82.30" width="2.40" height="2.40"/><rect x="56.43" y="82.30" width="2.40" height="2.40"/><rect x="58.78" y="82.30" width="2.40" height="2.40"/><rect x="63.49" y="82.30" width="2.40" height="2.40"/><rect x="65.84" y="82.30" width="2.40" height="2.40"/><rect x="68.19" y="82.30" width="2.40" height="2.40"/><rect x="70.54" y="82.30" width="2.40" height="2.40"/><rect x="72.89" y="82.30" width="2.40" height="2.40"/><rect x="84.65" y="82.30" width="2.40" height="2.40"/><rect x="0.00" y="84.65" width="2.40" height="2.40"/><rect x="2.35" y="84.65" width="2.40" height="2.40"/><rect x="4.70" y="84.65" width="2.40" height="2.40"/><rect x="7.05" y="84.65" width="2.40" height="2.40"/><rect x="9.41" y="84.65" width="2.40" height="2.40"/><rect x="11.76" y="84.65" width="2.40" height="2.40"/><rect x="14.11" y="84.65" width="2.40" height="2.40"/><rect x="18.81" y="84.65" width="2.40" height="2.40"/><rect x="21.16" y="84.65" width="2.40" height="2.40"/><rect x="39.97" y="84.65" width="2.40" height="2.40"/><rect x="42.32" y="84.65" width="2.40" height="2.40"/><rect x="47.03" y="84.65" width="2.40" height="2.40"/><rect x="49.38" y="84.65" width="2.40" height="2.40"/><rect x="58.78" y="84.65" width="2.40" height="2.40"/><rect x="61.14" y="84.65" width="2.40" height="2.40"/><rect x="63.49" y="84.65" width="2.40" height="2.40"/><rect x="68.19" y="84.65" width="2.40" height="2.40"/><rect x="75.24" y="84.65" width="2.40" height="2.40"/><rect x="82.30" y="84.65" width="2.40" height="2.40"/><rect x="84.65" y="84.65" width="2.40" height="2.40"/></g><rect x="32" y="32" width="23" height="23" fill="#fff"/><rect x="33" y="33" width="21" height="21" rx="2" fill="#d42a20"/></svg>
<svg style="left:652px;top:399.5px" width="22.3" height="22.3" viewBox="0 0 36 36"><g fill="#fff" transform="translate(-1 -1.5)"><path d="M5.7 11 C7.5 10.6 9.5 10.8 10.5 11.5 C11.5 13 12 15 12.4 16.5 C15 12 19.5 8.5 24.7 6.9 C25 8.5 25.2 10.5 25.2 11.9 C21.5 13 17 16.5 14.5 19.5 C13.2 21.5 13 24 15.1 27.9 C12 28 10 27.5 8.8 26.5 C7 24.5 6.3 21 6.3 17 C6.3 14.5 6.2 12.5 5.7 11Z"/><path d="M5.3 24.5 C7.5 30.5 13.5 32.6 19.5 31.6 C25 30.4 29 24 29.8 16.5 C26.5 18.5 21 21 17.3 25.3 C20.5 23.5 23 22.5 25.3 21.8 C23 27 18.5 29.6 13.5 29.4 C10 29.2 7 27.5 5.3 24.5Z"/><circle cx="27.5" cy="6" r="1"/><circle cx="29.3" cy="7.8" r="0.9"/><circle cx="25.8" cy="9.2" r="0.9"/><circle cx="28.3" cy="10.5" r="0.9"/><circle cx="25" cy="12.4" r="0.8"/></g></svg>
<div class="t" style="left:765px;top:399px;font-size:20px;line-height:20px;color:#000;font-weight:bold;font-family:'Liberation Serif',serif;letter-spacing:3.1px">郑州亚拓软件科技有限公司销售送货单</div>
<div class="t" style="left:821px;top:427px;font-size:13px;line-height:13px;color:#000;font-weight:normal;font-family:'Liberation Sans',sans-serif;letter-spacing:0.05px">地址：河南省郑州市金水区东风路明天财智名座</div>
<div class="t" style="left:855px;top:446px;font-size:13px;line-height:13px;color:#000;font-weight:normal;font-family:'Liberation Sans',sans-serif;">联系电话：<span style="font-family:'Liberation Mono',monospace;font-size:12.5px;letter-spacing:-0.5px">0371-63563890</span>&nbsp;&nbsp;&nbsp;传真：</div>
<div class="t" style="left:610px;top:471px;font-size:13px;line-height:13px;color:#000;font-weight:normal;font-family:'Liberation Sans',sans-serif;">客户名称：亚拓公司测试</div>
<div class="t" style="left:884px;top:471px;font-size:13px;line-height:13px;color:#000;font-weight:normal;font-family:'Liberation Sans',sans-serif;">单据编号：<span style="font-family:'Liberation Mono',monospace;font-size:12.5px;letter-spacing:-0.5px">XSCKD-20210709-0001</span></div>
<div class="t" style="left:1121px;top:471px;font-size:13px;line-height:13px;color:#000;font-weight:normal;font-family:'Liberation Sans',sans-serif;">日期：<span style="font-family:'Liberation Mono',monospace;font-size:12.5px;letter-spacing:-0.5px">2021</span>年<span style="font-family:'Liberation Mono',monospace;font-size:12.5px;letter-spacing:-0.5px">07</span>月<span style="font-family:'Liberation Mono',monospace;font-size:12.5px;letter-spacing:-0.5px">09</span>日</div>
<div class="r" style="left:605px;top:489px;width:680px;height:1px;background:#000"></div>
<div class="r" style="left:605px;top:527px;width:680px;height:1px;background:#000"></div>
<div class="r" style="left:605px;top:553px;width:680px;height:1px;background:#000"></div>
<div class="r" style="left:605px;top:579px;width:680px;height:1px;background:#000"></div>
<div class="r" style="left:605px;top:605px;width:680px;height:1px;background:#000"></div>
<div class="r" style="left:605px;top:631px;width:680px;height:1px;background:#000"></div>
<div class="r" style="left:605px;top:657px;width:680px;height:1px;background:#000"></div>
<div class="r" style="left:605px;top:683px;width:680px;height:1px;background:#000"></div>
<div class="r" style="left:605px;top:709px;width:680px;height:1px;background:#000"></div>
<div class="r" style="left:605px;top:738px;width:680px;height:1px;background:#000"></div>
<div class="r" style="left:605px;top:489px;width:1px;height:221px;background:#000"></div>
<div class="r" style="left:649px;top:489px;width:1px;height:221px;background:#000"></div>
<div class="r" style="left:873px;top:489px;width:1px;height:221px;background:#000"></div>
<div class="r" style="left:911px;top:489px;width:1px;height:221px;background:#000"></div>
<div class="r" style="left:977px;top:489px;width:1px;height:221px;background:#000"></div>
<div class="r" style="left:1045px;top:489px;width:1px;height:221px;background:#000"></div>
<div class="r" style="left:1167px;top:489px;width:1px;height:221px;background:#000"></div>
<div class="r" style="left:1285px;top:489px;width:1px;height:221px;background:#000"></div>
<div class="r" style="left:605px;top:709px;width:1px;height:30px;background:#000"></div>
<div class="r" style="left:649px;top:709px;width:1px;height:30px;background:#000"></div>
<div class="r" style="left:977px;top:709px;width:1px;height:30px;background:#000"></div>
<div class="r" style="left:1082px;top:508px;width:1px;height:231px;background:#000"></div>
<div class="r" style="left:1167px;top:709px;width:1px;height:30px;background:#000"></div>
<div class="r" style="left:1285px;top:709px;width:1px;height:30px;background:#000"></div>
<div class="r" style="left:1045px;top:508px;width:122px;height:1px;background:#000"></div>
<div class="r" style="left:1065px;top:527px;width:1px;height:182px;background:#c0c0c0"></div>
<div class="r" style="left:1065px;top:508px;width:1px;height:19px;background:#000"></div>
<div class="r" style="left:1082px;top:527px;width:1px;height:182px;background:#000"></div>
<div class="r" style="left:1082px;top:508px;width:1px;height:19px;background:#000"></div>
<div class="r" style="left:1100px;top:527px;width:1px;height:182px;background:#c0c0c0"></div>
<div class="r" style="left:1100px;top:508px;width:1px;height:19px;background:#000"></div>
<div class="r" style="left:1117px;top:527px;width:1px;height:182px;background:#c0c0c0"></div>
<div class="r" style="left:1117px;top:508px;width:1px;height:19px;background:#000"></div>
<div class="r" style="left:1134px;top:527px;width:1px;height:182px;background:#e00000"></div>
<div class="r" style="left:1134px;top:508px;width:1px;height:19px;background:#e00000"></div>
<div class="r" style="left:1151px;top:527px;width:1px;height:182px;background:#c0c0c0"></div>
<div class="r" style="left:1151px;top:508px;width:1px;height:19px;background:#000"></div>
<div class="t" style="left:614px;top:501px;font-size:13px;line-height:13px;color:#000;font-weight:bold;font-family:'Liberation Sans',sans-serif;">序号</div>
<div class="t" style="left:712px;top:501px;font-size:13px;line-height:13px;color:#000;font-weight:bold;font-family:'Liberation Sans',sans-serif;letter-spacing:1.5px">货品名称及规格</div>
<div class="t" style="left:878px;top:501px;font-size:13px;line-height:13px;color:#000;font-weight:bold;font-family:'Liberation Sans',sans-serif;">单位</div>
<div class="t" style="left:930px;top:501px;font-size:13px;line-height:13px;color:#000;font-weight:bold;font-family:'Liberation Sans',sans-serif;">数量</div>
<div class="t" style="left:993px;top:501px;font-size:13px;line-height:13px;color:#000;font-weight:bold;font-family:'Liberation Sans',sans-serif;">单&nbsp;&nbsp;价</div>
<div class="t" style="left:1089px;top:491px;font-size:13px;line-height:13px;color:#000;font-weight:bold;font-family:'Liberation Sans',sans-serif;">金&nbsp;&nbsp;额</div>
<div class="t" style="left:1199px;top:501px;font-size:13px;line-height:13px;color:#000;font-weight:bold;font-family:'Liberation Sans',sans-serif;">备&nbsp;&nbsp;&nbsp;&nbsp;&nbsp;&nbsp;注</div>
<div class="t" style="left:1049px;top:512px;font-size:13px;line-height:13px;color:#000;font-weight:normal;font-family:'Liberation Sans',sans-serif;">万</div>
<div class="t" style="left:1067px;top:512px;font-size:13px;line-height:13px;color:#000;font-weight:normal;font-family:'Liberation Sans',sans-serif;">千</div>
<div class="t" style="left:1085px;top:512px;font-size:13px;line-height:13px;color:#000;font-weight:normal;font-family:'Liberation Sans',sans-serif;">百</div>
<div class="t" style="left:1102px;top:512px;font-size:13px;line-height:13px;color:#000;font-weight:normal;font-family:'Liberation Sans',sans-serif;">十</div>
<div class="t" style="left:1119px;top:512px;font-size:13px;line-height:13px;color:#000;font-weight:normal;font-family:'Liberation Sans',sans-serif;">元</div>
<div class="t" style="left:1136px;top:512px;font-size:13px;line-height:13px;color:#000;font-weight:normal;font-family:'Liberation Sans',sans-serif;">角</div>
<div class="t" style="left:1153px;top:512px;font-size:13px;line-height:13px;color:#000;font-weight:normal;font-family:'Liberation Sans',sans-serif;">分</div>
<div class="t" style="left:624px;top:534.5px;font-size:12.5px;line-height:12.5px;color:#000;font-weight:normal;font-family:'Liberation Mono',monospace;letter-spacing:-0.5px">1</div>
<div class="t" style="left:651px;top:533px;font-size:13px;line-height:13px;color:#000;font-weight:normal;font-family:'Liberation Sans',sans-serif;">兄弟普通纸传真机</div>
<div class="t" style="left:885px;top:533px;font-size:13px;line-height:13px;color:#000;font-weight:normal;font-family:'Liberation Sans',sans-serif;">台</div>
<div class="t" style="left:937px;top:534.5px;font-size:12.5px;line-height:12.5px;color:#000;font-weight:normal;font-family:'Liberation Mono',monospace;letter-spacing:-0.5px">15</div>
<div class="t" style="left:990px;top:534.5px;font-size:12.5px;line-height:12.5px;color:#000;font-weight:normal;font-family:'Liberation Mono',monospace;letter-spacing:-0.5px">900.00</div>
<div class="t" style="left:1052px;top:534.5px;font-size:12.5px;line-height:12.5px;color:#000;font-weight:normal;font-family:'Liberation Mono',monospace;letter-spacing:-0.5px">1</div>
<div class="t" style="left:1070px;top:534.5px;font-size:12.5px;line-height:12.5px;color:#000;font-weight:normal;font-family:'Liberation Mono',monospace;letter-spacing:-0.5px">3</div>
<div class="t" style="left:1088px;top:534.5px;font-size:12.5px;line-height:12.5px;color:#000;font-weight:normal;font-family:'Liberation Mono',monospace;letter-spacing:-0.5px">5</div>
<div class="t" style="left:1105px;top:534.5px;font-size:12.5px;line-height:12.5px;color:#000;font-weight:normal;font-family:'Liberation Mono',monospace;letter-spacing:-0.5px">0</div>
<div class="t" style="left:1122px;top:534.5px;font-size:12.5px;line-height:12.5px;color:#000;font-weight:normal;font-family:'Liberation Mono',monospace;letter-spacing:-0.5px">0</div>
<div class="t" style="left:1139px;top:534.5px;font-size:12.5px;line-height:12.5px;color:#000;font-weight:normal;font-family:'Liberation Mono',monospace;letter-spacing:-0.5px">0</div>
<div class="t" style="left:1156px;top:534.5px;font-size:12.5px;line-height:12.5px;color:#000;font-weight:normal;font-family:'Liberation Mono',monospace;letter-spacing:-0.5px">0</div>
<div class="t" style="left:624px;top:560.5px;font-size:12.5px;line-height:12.5px;color:#000;font-weight:normal;font-family:'Liberation Mono',monospace;letter-spacing:-0.5px">2</div>
<div class="t" style="left:651px;top:559px;font-size:13px;line-height:13px;color:#000;font-weight:normal;font-family:'Liberation Sans',sans-serif;">得力订书针</div>
<div class="t" style="left:885px;top:559px;font-size:13px;line-height:13px;color:#000;font-weight:normal;font-family:'Liberation Sans',sans-serif;">袋</div>
<div class="t" style="left:933px;top:560.5px;font-size:12.5px;line-height:12.5px;color:#000;font-weight:normal;font-family:'Liberation Mono',monospace;letter-spacing:-0.5px">2.5</div>
<div class="t" style="left:994px;top:560.5px;font-size:12.5px;line-height:12.5px;color:#000;font-weight:normal;font-family:'Liberation Mono',monospace;letter-spacing:-0.5px">15.36</div>
<div class="t" style="left:1086px;top:560px;font-size:13px;line-height:13px;color:#000;font-weight:normal;font-family:'Liberation Sans',sans-serif;">￥</div>
<div class="t" style="left:1105px;top:560.5px;font-size:12.5px;line-height:12.5px;color:#000;font-weight:normal;font-family:'Liberation Mono',monospace;letter-spacing:-0.5px">3</div>
<div class="t" style="left:1122px;top:560.5px;font-size:12.5px;line-height:12.5px;color:#000;font-weight:normal;font-family:'Liberation Mono',monospace;letter-spacing:-0.5px">8</div>
<div class="t" style="left:1139px;top:560.5px;font-size:12.5px;line-height:12.5px;color:#000;font-weight:normal;font-family:'Liberation Mono',monospace;letter-spacing:-0.5px">3</div>
<div class="t" style="left:1156px;top:560.5px;font-size:12.5px;line-height:12.5px;color:#000;font-weight:normal;font-family:'Liberation Mono',monospace;letter-spacing:-0.5px">8</div>
<div class="t" style="left:624px;top:586.5px;font-size:12.5px;line-height:12.5px;color:#000;font-weight:normal;font-family:'Liberation Mono',monospace;letter-spacing:-0.5px">3</div>
<div class="t" style="left:651px;top:585px;font-size:13px;line-height:13px;color:#000;font-weight:normal;font-family:'Liberation Sans',sans-serif;">得力经典防滑握手设计圆珠笔 蓝色</div>
<div class="t" style="left:885px;top:585px;font-size:13px;line-height:13px;color:#000;font-weight:normal;font-family:'Liberation Sans',sans-serif;">只</div>
<div class="t" style="left:940px;top:586.5px;font-size:12.5px;line-height:12.5px;color:#000;font-weight:normal;font-family:'Liberation Mono',monospace;letter-spacing:-0.5px">2</div>
<div class="t" style="left:994px;top:586.5px;font-size:12.5px;line-height:12.5px;color:#000;font-weight:normal;font-family:'Liberation Mono',monospace;letter-spacing:-0.5px">99.90</div>
<div class="t" style="left:1068px;top:586px;font-size:13px;line-height:13px;color:#000;font-weight:normal;font-family:'Liberation Sans',sans-serif;">￥</div>
<div class="t" style="left:1088px;top:586.5px;font-size:12.5px;line-height:12.5px;color:#000;font-weight:normal;font-family:'Liberation Mono',monospace;letter-spacing:-0.5px">1</div>
<div class="t" style="left:1105px;top:586.5px;font-size:12.5px;line-height:12.5px;color:#000;font-weight:normal;font-family:'Liberation Mono',monospace;letter-spacing:-0.5px">9</div>
<div class="t" style="left:1122px;top:586.5px;font-size:12.5px;line-height:12.5px;color:#000;font-weight:normal;font-family:'Liberation Mono',monospace;letter-spacing:-0.5px">9</div>
<div class="t" style="left:1139px;top:586.5px;font-size:12.5px;line-height:12.5px;color:#000;font-weight:normal;font-family:'Liberation Mono',monospace;letter-spacing:-0.5px">8</div>
<div class="t" style="left:1156px;top:586.5px;font-size:12.5px;line-height:12.5px;color:#000;font-weight:normal;font-family:'Liberation Mono',monospace;letter-spacing:-0.5px">0</div>
<div class="t" style="left:762px;top:534.0px;font-size:12.5px;line-height:12.5px;color:#000;font-weight:normal;font-family:'Liberation Mono',monospace;letter-spacing:-0.5px">FAX-888</div>
<div class="t" style="left:614px;top:716px;font-size:13px;line-height:13px;color:#000;font-weight:bold;font-family:'Liberation Sans',sans-serif;">合计</div>
<div class="t" style="left:653px;top:716px;font-size:13px;line-height:13px;color:#000;font-weight:normal;font-family:'Liberation Sans',sans-serif;">（大写）壹万叁仟柒佰叁拾捌元壹角捌分柒厘伍</div>
<div class="t" style="left:997px;top:717px;font-size:13px;line-height:13px;color:#000;font-weight:normal;font-family:'Liberation Sans',sans-serif;">￥</div>
<div class="t" style="left:1009px;top:717.0px;font-size:12.5px;line-height:12.5px;color:#000;font-weight:normal;font-family:'Liberation Mono',monospace;letter-spacing:-0.5px">13738.19</div>
<div class="t" style="left:1098px;top:716px;font-size:13px;line-height:13px;color:#000;font-weight:bold;font-family:'Liberation Sans',sans-serif;">付款方式</div>
<div class="t" style="left:1291px;top:495.0px;font-size:12.5px;line-height:12.5px;color:#000;font-weight:normal;font-family:'Liberation Sans',sans-serif;">白</div>
<div class="t" style="left:1291px;top:507.9px;font-size:12.5px;line-height:12.5px;color:#000;font-weight:normal;font-family:'Liberation Sans',sans-serif;">联</div>
<div class="t" style="left:1291px;top:520.8px;font-size:12.5px;line-height:12.5px;color:#000;font-weight:normal;font-family:'Liberation Sans',sans-serif;">存</div>
<div class="t" style="left:1291px;top:533.7px;font-size:12.5px;line-height:12.5px;color:#000;font-weight:normal;font-family:'Liberation Sans',sans-serif;">根</div>
<div class="t" style="left:1291px;top:559.3px;font-size:12.5px;line-height:12.5px;color:#000;font-weight:normal;font-family:'Liberation Sans',sans-serif;">红</div>
<div class="t" style="left:1291px;top:572.2px;font-size:12.5px;line-height:12.5px;color:#000;font-weight:normal;font-family:'Liberation Sans',sans-serif;">联</div>
<div class="t" style="left:1291px;top:585.1px;font-size:12.5px;line-height:12.5px;color:#000;font-weight:normal;font-family:'Liberation Sans',sans-serif;">回</div>
<div class="t" style="left:1291px;top:598.0px;font-size:12.5px;line-height:12.5px;color:#000;font-weight:normal;font-family:'Liberation Sans',sans-serif;">单</div>
<div class="t" style="left:1291px;top:623.6px;font-size:12.5px;line-height:12.5px;color:#000;font-weight:normal;font-family:'Liberation Sans',sans-serif;">黄</div>
<div class="t" style="left:1291px;top:636.5px;font-size:12.5px;line-height:12.5px;color:#000;font-weight:normal;font-family:'Liberation Sans',sans-serif;">联</div>
<div class="t" style="left:1291px;top:649.4px;font-size:12.5px;line-height:12.5px;color:#000;font-weight:normal;font-family:'Liberation Sans',sans-serif;">客</div>
<div class="t" style="left:1291px;top:662.3px;font-size:12.5px;line-height:12.5px;color:#000;font-weight:normal;font-family:'Liberation Sans',sans-serif;">户</div>
<div class="t" style="left:1291px;top:687.9px;font-size:12.5px;line-height:12.5px;color:#000;font-weight:normal;font-family:'Liberation Sans',sans-serif;">兰</div>
<div class="t" style="left:1291px;top:700.8px;font-size:12.5px;line-height:12.5px;color:#000;font-weight:normal;font-family:'Liberation Sans',sans-serif;">联</div>
<div class="t" style="left:1291px;top:713.7px;font-size:12.5px;line-height:12.5px;color:#000;font-weight:normal;font-family:'Liberation Sans',sans-serif;">仓</div>
<div class="t" style="left:1291px;top:726.6px;font-size:12.5px;line-height:12.5px;color:#000;font-weight:normal;font-family:'Liberation Sans',sans-serif;">库</div>
<div class="r" style="left:908px;top:486px;width:263px;height:93px;box-sizing:border-box;border:2px solid #e81c1c"></div>
</body></html>
